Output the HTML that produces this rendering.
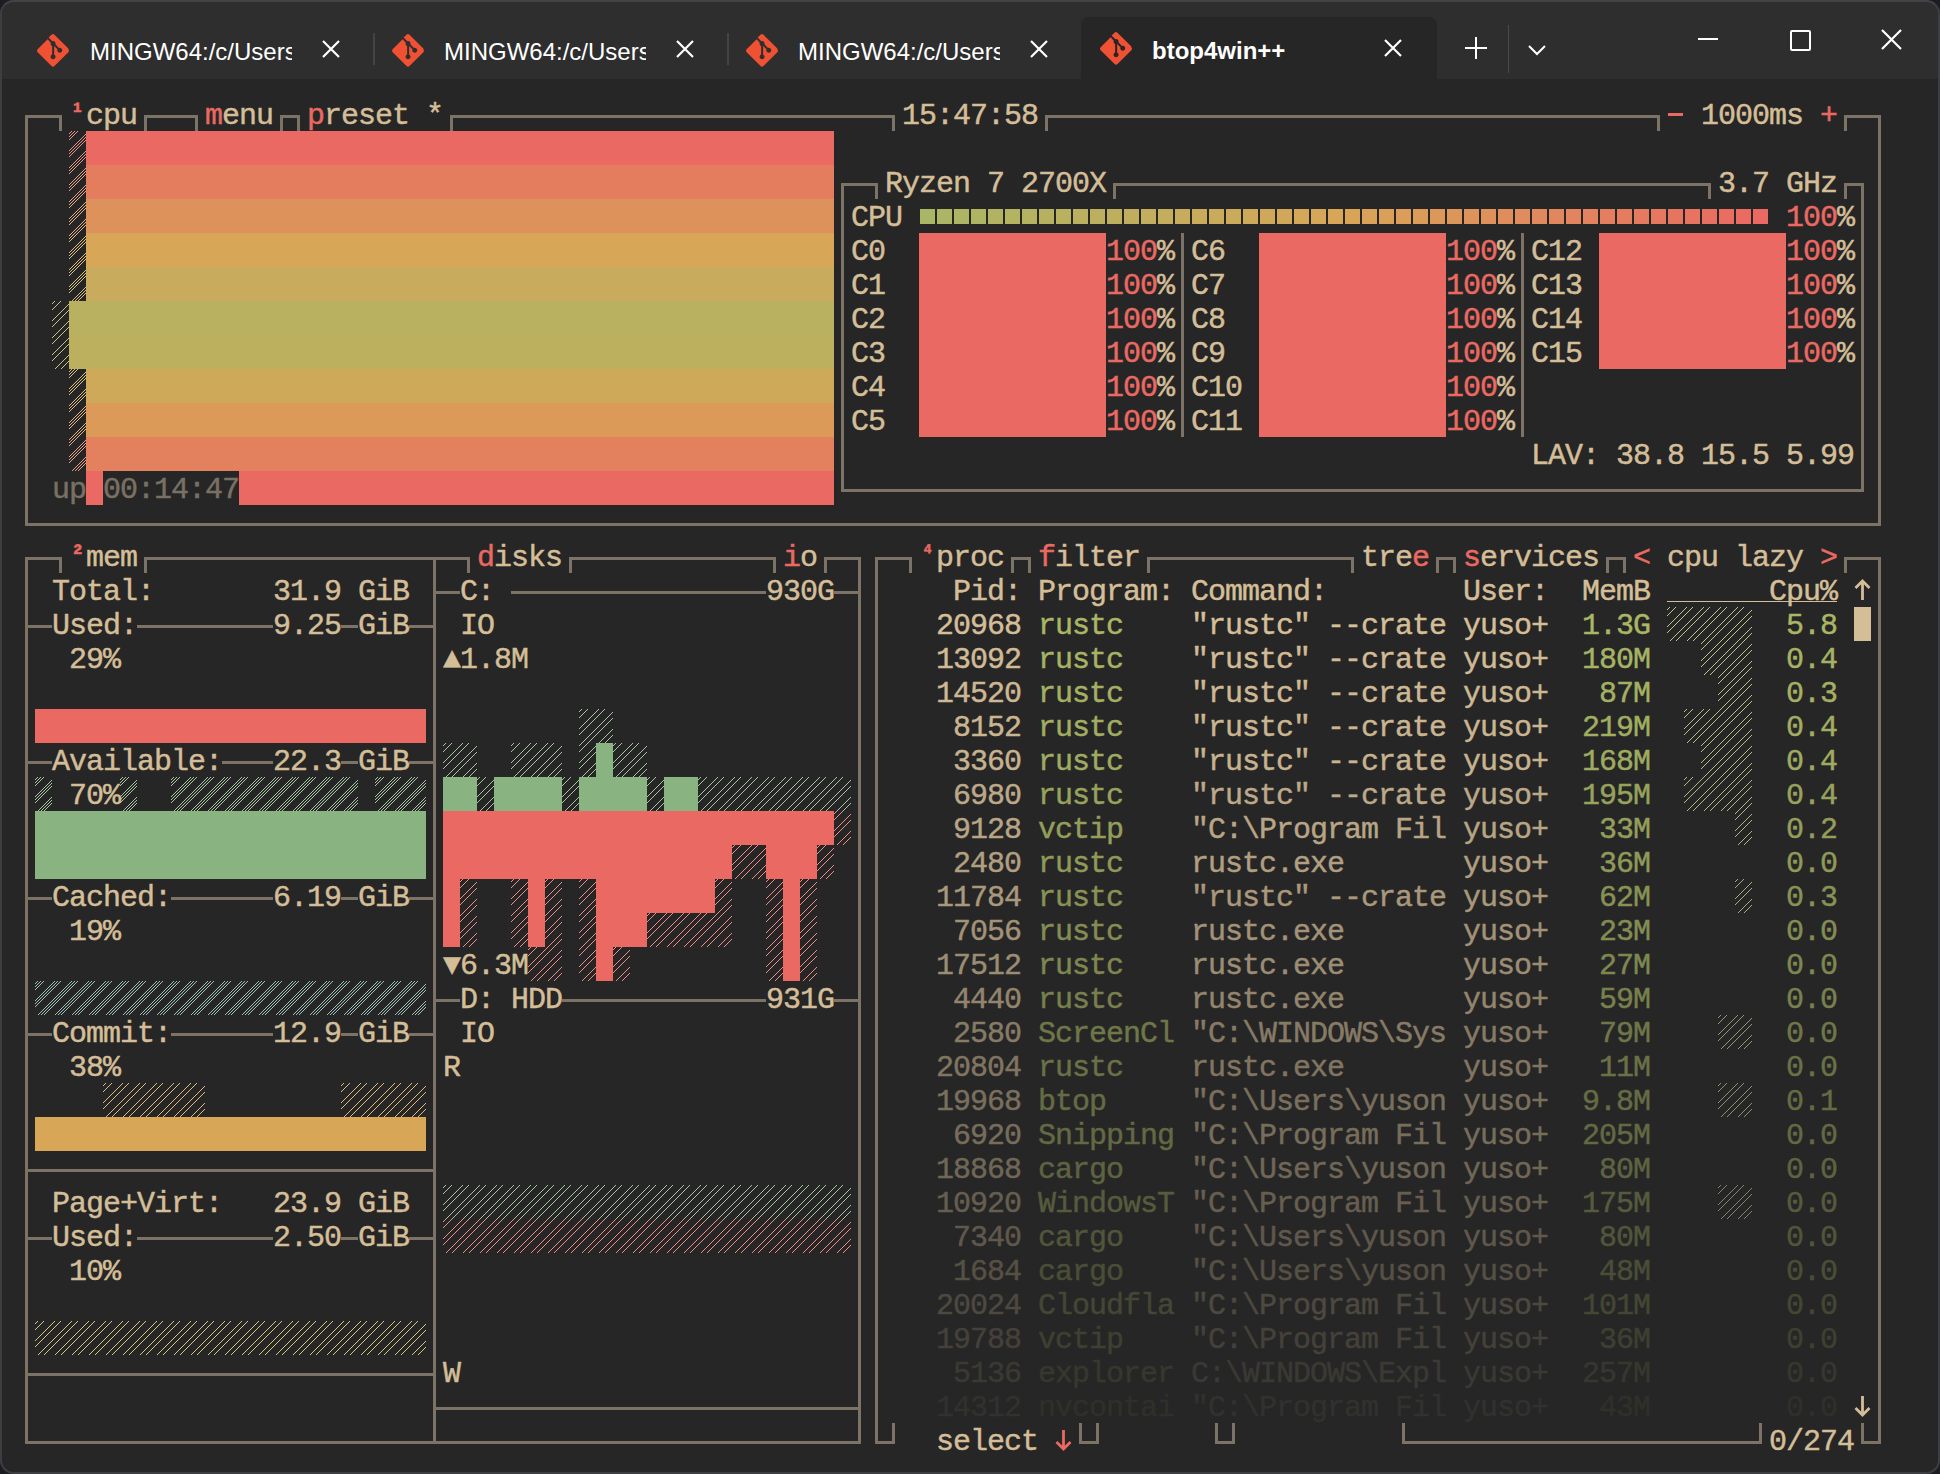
<!DOCTYPE html>
<html><head><meta charset="utf-8"><style>
html,body{margin:0;padding:0;background:#1c1d23;}
body{width:1940px;height:1474px;position:relative;overflow:hidden;}
#win{position:absolute;left:0;top:0;width:1940px;height:1474px;background:#262626;border-radius:14px;overflow:hidden;box-sizing:border-box;}
#tb{position:absolute;left:0;top:0;width:1940px;height:79px;background:#2e2e2e;}
#frame{position:absolute;left:0;top:0;width:1940px;height:1474px;box-sizing:border-box;border:2px solid #3d3e42;border-top:2px solid #424347;border-radius:14px;pointer-events:none;}
.t{position:absolute;-webkit-text-stroke:0.45px currentColor;font-family:"Liberation Mono",monospace;font-size:30px;letter-spacing:-1.00px;line-height:34px;white-space:pre;}
.tt{position:absolute;font-family:"Liberation Sans",sans-serif;font-size:24px;color:#fff;white-space:pre;overflow:hidden;line-height:34px;}
.gi{position:absolute;overflow:visible;}
svg.main{position:absolute;left:0;top:0;}
</style></head><body>
<div id="win">
<div id="tb"></div>
<div style="position:absolute;left:1081px;top:17px;width:356px;height:64px;background:#262626;border-radius:8px 8px 0 0"></div>
<svg class="gi" style="left:37px;top:34px" width="32" height="32" viewBox="0 0 92 92"><path fill="#f05133" d="M90.2 41.9L50.1 1.8c-2.3-2.3-6.1-2.3-8.4 0l-8.3 8.3 10.6 10.6c2.5-.8 5.3-.3 7.2 1.7 2 2 2.6 4.8 1.7 7.3l10.2 10.2c2.5-.9 5.3-.3 7.3 1.7 2.8 2.8 2.8 7.2 0 10-2.8 2.8-7.2 2.8-10 0-2.1-2.1-2.6-5.2-1.6-7.7l-9.5-9.5v25c.7.3 1.3.8 1.9 1.3 2.8 2.8 2.8 7.2 0 10-2.8 2.8-7.2 2.8-10 0-2.8-2.8-2.8-7.2 0-10 .7-.7 1.5-1.2 2.3-1.6V34.8c-.8-.4-1.6-.9-2.3-1.6-2.1-2.1-2.6-5.2-1.5-7.8L30.7 14.9 1.8 43.8c-2.3 2.3-2.3 6.1 0 8.4l40.1 40.1c2.3 2.3 6.1 2.3 8.4 0l39.9-39.9c2.3-2.3 2.3-6.1 0-8.5z"/></svg>
<div class="tt" style="left:90px;top:35px;width:202px">MINGW64:/c/Users\yuson</div>
<svg class="gi" style="left:322px;top:40px" width="18" height="18"><path d="M1,1 L17,17 M17,1 L1,17" stroke="#ffffff" stroke-width="2.2" fill="none"/></svg>
<svg class="gi" style="left:392px;top:34px" width="32" height="32" viewBox="0 0 92 92"><path fill="#f05133" d="M90.2 41.9L50.1 1.8c-2.3-2.3-6.1-2.3-8.4 0l-8.3 8.3 10.6 10.6c2.5-.8 5.3-.3 7.2 1.7 2 2 2.6 4.8 1.7 7.3l10.2 10.2c2.5-.9 5.3-.3 7.3 1.7 2.8 2.8 2.8 7.2 0 10-2.8 2.8-7.2 2.8-10 0-2.1-2.1-2.6-5.2-1.6-7.7l-9.5-9.5v25c.7.3 1.3.8 1.9 1.3 2.8 2.8 2.8 7.2 0 10-2.8 2.8-7.2 2.8-10 0-2.8-2.8-2.8-7.2 0-10 .7-.7 1.5-1.2 2.3-1.6V34.8c-.8-.4-1.6-.9-2.3-1.6-2.1-2.1-2.6-5.2-1.5-7.8L30.7 14.9 1.8 43.8c-2.3 2.3-2.3 6.1 0 8.4l40.1 40.1c2.3 2.3 6.1 2.3 8.4 0l39.9-39.9c2.3-2.3 2.3-6.1 0-8.5z"/></svg>
<div class="tt" style="left:444px;top:35px;width:202px">MINGW64:/c/Users\yuson</div>
<svg class="gi" style="left:676px;top:40px" width="18" height="18"><path d="M1,1 L17,17 M17,1 L1,17" stroke="#ffffff" stroke-width="2.2" fill="none"/></svg>
<svg class="gi" style="left:746px;top:34px" width="32" height="32" viewBox="0 0 92 92"><path fill="#f05133" d="M90.2 41.9L50.1 1.8c-2.3-2.3-6.1-2.3-8.4 0l-8.3 8.3 10.6 10.6c2.5-.8 5.3-.3 7.2 1.7 2 2 2.6 4.8 1.7 7.3l10.2 10.2c2.5-.9 5.3-.3 7.3 1.7 2.8 2.8 2.8 7.2 0 10-2.8 2.8-7.2 2.8-10 0-2.1-2.1-2.6-5.2-1.6-7.7l-9.5-9.5v25c.7.3 1.3.8 1.9 1.3 2.8 2.8 2.8 7.2 0 10-2.8 2.8-7.2 2.8-10 0-2.8-2.8-2.8-7.2 0-10 .7-.7 1.5-1.2 2.3-1.6V34.8c-.8-.4-1.6-.9-2.3-1.6-2.1-2.1-2.6-5.2-1.5-7.8L30.7 14.9 1.8 43.8c-2.3 2.3-2.3 6.1 0 8.4l40.1 40.1c2.3 2.3 6.1 2.3 8.4 0l39.9-39.9c2.3-2.3 2.3-6.1 0-8.5z"/></svg>
<div class="tt" style="left:798px;top:35px;width:202px">MINGW64:/c/Users\yuson</div>
<svg class="gi" style="left:1030px;top:40px" width="18" height="18"><path d="M1,1 L17,17 M17,1 L1,17" stroke="#ffffff" stroke-width="2.2" fill="none"/></svg>
<div style="position:absolute;left:373px;top:33px;width:2px;height:32px;background:#444"></div>
<div style="position:absolute;left:727px;top:33px;width:2px;height:32px;background:#444"></div>
<svg class="gi" style="left:1100px;top:32px" width="32" height="32" viewBox="0 0 92 92"><path fill="#f05133" d="M90.2 41.9L50.1 1.8c-2.3-2.3-6.1-2.3-8.4 0l-8.3 8.3 10.6 10.6c2.5-.8 5.3-.3 7.2 1.7 2 2 2.6 4.8 1.7 7.3l10.2 10.2c2.5-.9 5.3-.3 7.3 1.7 2.8 2.8 2.8 7.2 0 10-2.8 2.8-7.2 2.8-10 0-2.1-2.1-2.6-5.2-1.6-7.7l-9.5-9.5v25c.7.3 1.3.8 1.9 1.3 2.8 2.8 2.8 7.2 0 10-2.8 2.8-7.2 2.8-10 0-2.8-2.8-2.8-7.2 0-10 .7-.7 1.5-1.2 2.3-1.6V34.8c-.8-.4-1.6-.9-2.3-1.6-2.1-2.1-2.6-5.2-1.5-7.8L30.7 14.9 1.8 43.8c-2.3 2.3-2.3 6.1 0 8.4l40.1 40.1c2.3 2.3 6.1 2.3 8.4 0l39.9-39.9c2.3-2.3 2.3-6.1 0-8.5z"/></svg>
<div class="tt" style="left:1152px;top:34px;font-weight:bold">btop4win++</div>
<svg class="gi" style="left:1384px;top:39px" width="18" height="18"><path d="M1,1 L17,17 M17,1 L1,17" stroke="#ffffff" stroke-width="2.2" fill="none"/></svg>
<svg class="gi" style="left:1465px;top:37px" width="22" height="22"><path d="M11,0 V22 M0,11 H22" stroke="#fff" stroke-width="2"/></svg>
<div style="position:absolute;left:1508px;top:25px;width:1px;height:48px;background:#4a4a4a"></div>
<svg class="gi" style="left:1528px;top:45px" width="18" height="11"><path d="M1,1 L9,9 L17,1" stroke="#fff" stroke-width="2" fill="none"/></svg>
<div style="position:absolute;left:1698px;top:38px;width:20px;height:2px;background:#fff"></div>
<div style="position:absolute;left:1790px;top:30px;width:17px;height:17px;border:2px solid #fff;border-radius:2px"></div>
<svg class="gi" style="left:1881px;top:29px" width="21" height="21"><path d="M1,1 L20,20 M20,1 L1,20" stroke="#ffffff" stroke-width="2.2" fill="none"/></svg>
<svg class="main" width="1940" height="1474" shape-rendering="crispEdges"><path fill="#ea6962" d="M1668 113h15v3h-15zM86 131h748v34h-748zM86 471h17v34h-17zM239 471h595v34h-595zM1753 209h15v15h-15zM919 233h187v34h-187zM1259 233h187v34h-187zM1599 233h187v34h-187zM919 267h187v34h-187zM1259 267h187v34h-187zM1599 267h187v34h-187zM919 301h187v34h-187zM1259 301h187v34h-187zM1599 301h187v34h-187zM919 335h187v34h-187zM1259 335h187v34h-187zM1599 335h187v34h-187zM919 369h187v34h-187zM1259 369h187v34h-187zM919 403h187v34h-187zM1259 403h187v34h-187zM35 709h391v34h-391zM443 811h391v34h-391zM443 845h289v34h-289zM766 845h51v34h-51zM443 879h17v34h-17zM528 879h17v34h-17zM596 879h119v34h-119zM783 879h17v34h-17zM443 913h17v34h-17zM528 913h17v34h-17zM596 913h51v34h-51zM783 913h17v34h-17zM596 947h17v34h-17zM783 947h17v34h-17z"/><path fill="#e47d5e" d="M86 165h748v34h-748zM1617 209h15v15h-15z"/><path fill="#de925b" d="M86 199h748v34h-748z"/><path fill="#d8a657" d="M86 233h748v34h-748zM35 1117h391v34h-391z"/><path fill="#c8ab5c" d="M86 267h748v34h-748z"/><path fill="#b9b160" d="M69 301h765v34h-765z"/><path fill="#bcb05f" d="M69 335h765v34h-765z"/><path fill="#cfa95a" d="M86 369h748v34h-748zM1260 209h15v15h-15z"/><path fill="#dc9a59" d="M86 403h748v34h-748z"/><path fill="#e3815e" d="M86 437h748v34h-748z"/><path fill="#a9b665" d="M920 209h15v15h-15z"/><path fill="#abb564" d="M937 209h15v15h-15z"/><path fill="#adb564" d="M954 209h15v15h-15z"/><path fill="#afb463" d="M971 209h15v15h-15z"/><path fill="#b1b363" d="M988 209h15v15h-15z"/><path fill="#b3b362" d="M1005 209h15v15h-15z"/><path fill="#b5b262" d="M1022 209h15v15h-15z"/><path fill="#b6b161" d="M1039 209h15v15h-15z"/><path fill="#b8b160" d="M1056 209h15v15h-15z"/><path fill="#bab060" d="M1073 209h15v15h-15z"/><path fill="#bcaf5f" d="M1090 209h15v15h-15z"/><path fill="#beaf5f" d="M1107 209h15v15h-15z"/><path fill="#c0ae5e" d="M1124 209h15v15h-15z"/><path fill="#c2ae5e" d="M1141 209h15v15h-15z"/><path fill="#c4ad5d" d="M1158 209h15v15h-15z"/><path fill="#c6ac5c" d="M1175 209h15v15h-15z"/><path fill="#c8ac5c" d="M1192 209h15v15h-15z"/><path fill="#caab5b" d="M1209 209h15v15h-15z"/><path fill="#ccaa5b" d="M1226 209h15v15h-15z"/><path fill="#cdaa5a" d="M1243 209h15v15h-15z"/><path fill="#d1a859" d="M1277 209h15v15h-15z"/><path fill="#d3a858" d="M1294 209h15v15h-15z"/><path fill="#d5a758" d="M1311 209h15v15h-15z"/><path fill="#d7a657" d="M1328 209h15v15h-15z"/><path fill="#d8a557" d="M1345 209h15v15h-15z"/><path fill="#d9a258" d="M1362 209h15v15h-15z"/><path fill="#daa058" d="M1379 209h15v15h-15z"/><path fill="#db9d59" d="M1396 209h15v15h-15z"/><path fill="#db9b59" d="M1413 209h15v15h-15z"/><path fill="#dc9859" d="M1430 209h15v15h-15z"/><path fill="#dd965a" d="M1447 209h15v15h-15z"/><path fill="#de935a" d="M1464 209h15v15h-15z"/><path fill="#de915b" d="M1481 209h15v15h-15z"/><path fill="#df8e5b" d="M1498 209h15v15h-15z"/><path fill="#e08c5c" d="M1515 209h15v15h-15z"/><path fill="#e0895c" d="M1532 209h15v15h-15z"/><path fill="#e1875d" d="M1549 209h15v15h-15z"/><path fill="#e2845d" d="M1566 209h15v15h-15z"/><path fill="#e3825e" d="M1583 209h15v15h-15z"/><path fill="#e37f5e" d="M1600 209h15v15h-15z"/><path fill="#e57a5f" d="M1634 209h15v15h-15z"/><path fill="#e6785f" d="M1651 209h15v15h-15z"/><path fill="#e67560" d="M1668 209h15v15h-15z"/><path fill="#e77360" d="M1685 209h15v15h-15z"/><path fill="#e87061" d="M1702 209h15v15h-15z"/><path fill="#e96e61" d="M1719 209h15v15h-15z"/><path fill="#e96b62" d="M1736 209h15v15h-15z"/><path fill="#89b482" d="M35 811h391v68h-391zM596 743h17v34h-17zM443 777h34v34h-34zM494 777h68v34h-68zM579 777h68v34h-68zM664 777h34v34h-34z"/><path fill="#d4be98" d="M1667 601h170v1h-170zM1854 607h17v34h-17z"/></svg>
<svg class="main" width="1940" height="1474"><defs><pattern id="p0" patternUnits="userSpaceOnUse" x="18" y="97" width="17" height="17"><path d="M2 0h1v1h-1zM1 1h1v1h-1zM0 2h1v1h-1zM16 3h1v1h-1zM15 4h1v1h-1zM14 5h1v1h-1zM13 6h1v1h-1zM12 7h1v1h-1zM11 8h1v1h-1zM10 9h1v1h-1zM9 10h1v1h-1zM8 11h1v1h-1zM7 12h1v1h-1zM6 13h1v1h-1zM5 14h1v1h-1zM4 15h1v1h-1zM3 16h1v1h-1zM5 0h1v1h-1zM4 1h1v1h-1zM3 2h1v1h-1zM2 3h1v1h-1zM1 4h1v1h-1zM0 5h1v1h-1zM16 6h1v1h-1zM15 7h1v1h-1zM14 8h1v1h-1zM13 9h1v1h-1zM12 10h1v1h-1zM11 11h1v1h-1zM10 12h1v1h-1zM9 13h1v1h-1zM8 14h1v1h-1zM7 15h1v1h-1zM6 16h1v1h-1zM8 0h1v1h-1zM7 1h1v1h-1zM6 2h1v1h-1zM5 3h1v1h-1zM4 4h1v1h-1zM3 5h1v1h-1zM2 6h1v1h-1zM1 7h1v1h-1zM0 8h1v1h-1zM16 9h1v1h-1zM15 10h1v1h-1zM14 11h1v1h-1zM13 12h1v1h-1zM12 13h1v1h-1zM11 14h1v1h-1zM10 15h1v1h-1zM9 16h1v1h-1z" fill="#ef8e89" shape-rendering="crispEdges"/></pattern><pattern id="p1" patternUnits="userSpaceOnUse" x="18" y="97" width="17" height="17"><path d="M2 0h1v1h-1zM1 1h1v1h-1zM0 2h1v1h-1zM16 3h1v1h-1zM15 4h1v1h-1zM14 5h1v1h-1zM13 6h1v1h-1zM12 7h1v1h-1zM11 8h1v1h-1zM10 9h1v1h-1zM9 10h1v1h-1zM8 11h1v1h-1zM7 12h1v1h-1zM6 13h1v1h-1zM5 14h1v1h-1zM4 15h1v1h-1zM3 16h1v1h-1zM5 0h1v1h-1zM4 1h1v1h-1zM3 2h1v1h-1zM2 3h1v1h-1zM1 4h1v1h-1zM0 5h1v1h-1zM16 6h1v1h-1zM15 7h1v1h-1zM14 8h1v1h-1zM13 9h1v1h-1zM12 10h1v1h-1zM11 11h1v1h-1zM10 12h1v1h-1zM9 13h1v1h-1zM8 14h1v1h-1zM7 15h1v1h-1zM6 16h1v1h-1zM8 0h1v1h-1zM7 1h1v1h-1zM6 2h1v1h-1zM5 3h1v1h-1zM4 4h1v1h-1zM3 5h1v1h-1zM2 6h1v1h-1zM1 7h1v1h-1zM0 8h1v1h-1zM16 9h1v1h-1zM15 10h1v1h-1zM14 11h1v1h-1zM13 12h1v1h-1zM12 13h1v1h-1zM11 14h1v1h-1zM10 15h1v1h-1zM9 16h1v1h-1z" fill="#eb9e86" shape-rendering="crispEdges"/></pattern><pattern id="p2" patternUnits="userSpaceOnUse" x="18" y="97" width="17" height="17"><path d="M2 0h1v1h-1zM1 1h1v1h-1zM0 2h1v1h-1zM16 3h1v1h-1zM15 4h1v1h-1zM14 5h1v1h-1zM13 6h1v1h-1zM12 7h1v1h-1zM11 8h1v1h-1zM10 9h1v1h-1zM9 10h1v1h-1zM8 11h1v1h-1zM7 12h1v1h-1zM6 13h1v1h-1zM5 14h1v1h-1zM4 15h1v1h-1zM3 16h1v1h-1zM5 0h1v1h-1zM4 1h1v1h-1zM3 2h1v1h-1zM2 3h1v1h-1zM1 4h1v1h-1zM0 5h1v1h-1zM16 6h1v1h-1zM15 7h1v1h-1zM14 8h1v1h-1zM13 9h1v1h-1zM12 10h1v1h-1zM11 11h1v1h-1zM10 12h1v1h-1zM9 13h1v1h-1zM8 14h1v1h-1zM7 15h1v1h-1zM6 16h1v1h-1zM8 0h1v1h-1zM7 1h1v1h-1zM6 2h1v1h-1zM5 3h1v1h-1zM4 4h1v1h-1zM3 5h1v1h-1zM2 6h1v1h-1zM1 7h1v1h-1zM0 8h1v1h-1zM16 9h1v1h-1zM15 10h1v1h-1zM14 11h1v1h-1zM13 12h1v1h-1zM12 13h1v1h-1zM11 14h1v1h-1zM10 15h1v1h-1zM9 16h1v1h-1z" fill="#e6ad84" shape-rendering="crispEdges"/></pattern><pattern id="p3" patternUnits="userSpaceOnUse" x="18" y="97" width="17" height="17"><path d="M2 0h1v1h-1zM1 1h1v1h-1zM0 2h1v1h-1zM16 3h1v1h-1zM15 4h1v1h-1zM14 5h1v1h-1zM13 6h1v1h-1zM12 7h1v1h-1zM11 8h1v1h-1zM10 9h1v1h-1zM9 10h1v1h-1zM8 11h1v1h-1zM7 12h1v1h-1zM6 13h1v1h-1zM5 14h1v1h-1zM4 15h1v1h-1zM3 16h1v1h-1zM5 0h1v1h-1zM4 1h1v1h-1zM3 2h1v1h-1zM2 3h1v1h-1zM1 4h1v1h-1zM0 5h1v1h-1zM16 6h1v1h-1zM15 7h1v1h-1zM14 8h1v1h-1zM13 9h1v1h-1zM12 10h1v1h-1zM11 11h1v1h-1zM10 12h1v1h-1zM9 13h1v1h-1zM8 14h1v1h-1zM7 15h1v1h-1zM6 16h1v1h-1zM8 0h1v1h-1zM7 1h1v1h-1zM6 2h1v1h-1zM5 3h1v1h-1zM4 4h1v1h-1zM3 5h1v1h-1zM2 6h1v1h-1zM1 7h1v1h-1zM0 8h1v1h-1zM16 9h1v1h-1zM15 10h1v1h-1zM14 11h1v1h-1zM13 12h1v1h-1zM12 13h1v1h-1zM11 14h1v1h-1zM10 15h1v1h-1zM9 16h1v1h-1z" fill="#e2bc81" shape-rendering="crispEdges"/></pattern><pattern id="p4" patternUnits="userSpaceOnUse" x="18" y="97" width="17" height="17"><path d="M2 0h1v1h-1zM1 1h1v1h-1zM0 2h1v1h-1zM16 3h1v1h-1zM15 4h1v1h-1zM14 5h1v1h-1zM13 6h1v1h-1zM12 7h1v1h-1zM11 8h1v1h-1zM10 9h1v1h-1zM9 10h1v1h-1zM8 11h1v1h-1zM7 12h1v1h-1zM6 13h1v1h-1zM5 14h1v1h-1zM4 15h1v1h-1zM3 16h1v1h-1zM5 0h1v1h-1zM4 1h1v1h-1zM3 2h1v1h-1zM2 3h1v1h-1zM1 4h1v1h-1zM0 5h1v1h-1zM16 6h1v1h-1zM15 7h1v1h-1zM14 8h1v1h-1zM13 9h1v1h-1zM12 10h1v1h-1zM11 11h1v1h-1zM10 12h1v1h-1zM9 13h1v1h-1zM8 14h1v1h-1zM7 15h1v1h-1zM6 16h1v1h-1zM8 0h1v1h-1zM7 1h1v1h-1zM6 2h1v1h-1zM5 3h1v1h-1zM4 4h1v1h-1zM3 5h1v1h-1zM2 6h1v1h-1zM1 7h1v1h-1zM0 8h1v1h-1zM16 9h1v1h-1zM15 10h1v1h-1zM14 11h1v1h-1zM13 12h1v1h-1zM12 13h1v1h-1zM11 14h1v1h-1zM10 15h1v1h-1zM9 16h1v1h-1z" fill="#d6c085" shape-rendering="crispEdges"/></pattern><pattern id="p5" patternUnits="userSpaceOnUse" x="18" y="97" width="17" height="17"><path d="M2 0h1v1h-1zM1 1h1v1h-1zM0 2h1v1h-1zM16 3h1v1h-1zM15 4h1v1h-1zM14 5h1v1h-1zM13 6h1v1h-1zM12 7h1v1h-1zM11 8h1v1h-1zM10 9h1v1h-1zM9 10h1v1h-1zM8 11h1v1h-1zM7 12h1v1h-1zM6 13h1v1h-1zM5 14h1v1h-1zM4 15h1v1h-1zM3 16h1v1h-1zM8 0h1v1h-1zM7 1h1v1h-1zM6 2h1v1h-1zM5 3h1v1h-1zM4 4h1v1h-1zM3 5h1v1h-1zM2 6h1v1h-1zM1 7h1v1h-1zM0 8h1v1h-1zM16 9h1v1h-1zM15 10h1v1h-1zM14 11h1v1h-1zM13 12h1v1h-1zM12 13h1v1h-1zM11 14h1v1h-1zM10 15h1v1h-1zM9 16h1v1h-1z" fill="#cac488" shape-rendering="crispEdges"/></pattern><pattern id="p6" patternUnits="userSpaceOnUse" x="18" y="97" width="17" height="17"><path d="M2 0h1v1h-1zM1 1h1v1h-1zM0 2h1v1h-1zM16 3h1v1h-1zM15 4h1v1h-1zM14 5h1v1h-1zM13 6h1v1h-1zM12 7h1v1h-1zM11 8h1v1h-1zM10 9h1v1h-1zM9 10h1v1h-1zM8 11h1v1h-1zM7 12h1v1h-1zM6 13h1v1h-1zM5 14h1v1h-1zM4 15h1v1h-1zM3 16h1v1h-1zM8 0h1v1h-1zM7 1h1v1h-1zM6 2h1v1h-1zM5 3h1v1h-1zM4 4h1v1h-1zM3 5h1v1h-1zM2 6h1v1h-1zM1 7h1v1h-1zM0 8h1v1h-1zM16 9h1v1h-1zM15 10h1v1h-1zM14 11h1v1h-1zM13 12h1v1h-1zM12 13h1v1h-1zM11 14h1v1h-1zM10 15h1v1h-1zM9 16h1v1h-1z" fill="#cdc487" shape-rendering="crispEdges"/></pattern><pattern id="p7" patternUnits="userSpaceOnUse" x="18" y="97" width="17" height="17"><path d="M2 0h1v1h-1zM1 1h1v1h-1zM0 2h1v1h-1zM16 3h1v1h-1zM15 4h1v1h-1zM14 5h1v1h-1zM13 6h1v1h-1zM12 7h1v1h-1zM11 8h1v1h-1zM10 9h1v1h-1zM9 10h1v1h-1zM8 11h1v1h-1zM7 12h1v1h-1zM6 13h1v1h-1zM5 14h1v1h-1zM4 15h1v1h-1zM3 16h1v1h-1zM5 0h1v1h-1zM4 1h1v1h-1zM3 2h1v1h-1zM2 3h1v1h-1zM1 4h1v1h-1zM0 5h1v1h-1zM16 6h1v1h-1zM15 7h1v1h-1zM14 8h1v1h-1zM13 9h1v1h-1zM12 10h1v1h-1zM11 11h1v1h-1zM10 12h1v1h-1zM9 13h1v1h-1zM8 14h1v1h-1zM7 15h1v1h-1zM6 16h1v1h-1zM8 0h1v1h-1zM7 1h1v1h-1zM6 2h1v1h-1zM5 3h1v1h-1zM4 4h1v1h-1zM3 5h1v1h-1zM2 6h1v1h-1zM1 7h1v1h-1zM0 8h1v1h-1zM16 9h1v1h-1zM15 10h1v1h-1zM14 11h1v1h-1zM13 12h1v1h-1zM12 13h1v1h-1zM11 14h1v1h-1zM10 15h1v1h-1zM9 16h1v1h-1z" fill="#dbbe83" shape-rendering="crispEdges"/></pattern><pattern id="p8" patternUnits="userSpaceOnUse" x="18" y="97" width="17" height="17"><path d="M2 0h1v1h-1zM1 1h1v1h-1zM0 2h1v1h-1zM16 3h1v1h-1zM15 4h1v1h-1zM14 5h1v1h-1zM13 6h1v1h-1zM12 7h1v1h-1zM11 8h1v1h-1zM10 9h1v1h-1zM9 10h1v1h-1zM8 11h1v1h-1zM7 12h1v1h-1zM6 13h1v1h-1zM5 14h1v1h-1zM4 15h1v1h-1zM3 16h1v1h-1zM5 0h1v1h-1zM4 1h1v1h-1zM3 2h1v1h-1zM2 3h1v1h-1zM1 4h1v1h-1zM0 5h1v1h-1zM16 6h1v1h-1zM15 7h1v1h-1zM14 8h1v1h-1zM13 9h1v1h-1zM12 10h1v1h-1zM11 11h1v1h-1zM10 12h1v1h-1zM9 13h1v1h-1zM8 14h1v1h-1zM7 15h1v1h-1zM6 16h1v1h-1zM8 0h1v1h-1zM7 1h1v1h-1zM6 2h1v1h-1zM5 3h1v1h-1zM4 4h1v1h-1zM3 5h1v1h-1zM2 6h1v1h-1zM1 7h1v1h-1zM0 8h1v1h-1zM16 9h1v1h-1zM15 10h1v1h-1zM14 11h1v1h-1zM13 12h1v1h-1zM12 13h1v1h-1zM11 14h1v1h-1zM10 15h1v1h-1zM9 16h1v1h-1z" fill="#e5b382" shape-rendering="crispEdges"/></pattern><pattern id="p9" patternUnits="userSpaceOnUse" x="18" y="97" width="17" height="17"><path d="M2 0h1v1h-1zM1 1h1v1h-1zM0 2h1v1h-1zM16 3h1v1h-1zM15 4h1v1h-1zM14 5h1v1h-1zM13 6h1v1h-1zM12 7h1v1h-1zM11 8h1v1h-1zM10 9h1v1h-1zM9 10h1v1h-1zM8 11h1v1h-1zM7 12h1v1h-1zM6 13h1v1h-1zM5 14h1v1h-1zM4 15h1v1h-1zM3 16h1v1h-1zM5 0h1v1h-1zM4 1h1v1h-1zM3 2h1v1h-1zM2 3h1v1h-1zM1 4h1v1h-1zM0 5h1v1h-1zM16 6h1v1h-1zM15 7h1v1h-1zM14 8h1v1h-1zM13 9h1v1h-1zM12 10h1v1h-1zM11 11h1v1h-1zM10 12h1v1h-1zM9 13h1v1h-1zM8 14h1v1h-1zM7 15h1v1h-1zM6 16h1v1h-1zM8 0h1v1h-1zM7 1h1v1h-1zM6 2h1v1h-1zM5 3h1v1h-1zM4 4h1v1h-1zM3 5h1v1h-1zM2 6h1v1h-1zM1 7h1v1h-1zM0 8h1v1h-1zM16 9h1v1h-1zM15 10h1v1h-1zM14 11h1v1h-1zM13 12h1v1h-1zM12 13h1v1h-1zM11 14h1v1h-1zM10 15h1v1h-1zM9 16h1v1h-1z" fill="#eaa086" shape-rendering="crispEdges"/></pattern><pattern id="p10" patternUnits="userSpaceOnUse" x="18" y="97" width="17" height="17"><path d="M2 0h1v1h-1zM1 1h1v1h-1zM0 2h1v1h-1zM16 3h1v1h-1zM15 4h1v1h-1zM14 5h1v1h-1zM13 6h1v1h-1zM12 7h1v1h-1zM11 8h1v1h-1zM10 9h1v1h-1zM9 10h1v1h-1zM8 11h1v1h-1zM7 12h1v1h-1zM6 13h1v1h-1zM5 14h1v1h-1zM4 15h1v1h-1zM3 16h1v1h-1zM5 0h1v1h-1zM4 1h1v1h-1zM3 2h1v1h-1zM2 3h1v1h-1zM1 4h1v1h-1zM0 5h1v1h-1zM16 6h1v1h-1zM15 7h1v1h-1zM14 8h1v1h-1zM13 9h1v1h-1zM12 10h1v1h-1zM11 11h1v1h-1zM10 12h1v1h-1zM9 13h1v1h-1zM8 14h1v1h-1zM7 15h1v1h-1zM6 16h1v1h-1zM8 0h1v1h-1zM7 1h1v1h-1zM6 2h1v1h-1zM5 3h1v1h-1zM4 4h1v1h-1zM3 5h1v1h-1zM2 6h1v1h-1zM1 7h1v1h-1zM0 8h1v1h-1zM16 9h1v1h-1zM15 10h1v1h-1zM14 11h1v1h-1zM13 12h1v1h-1zM12 13h1v1h-1zM11 14h1v1h-1zM10 15h1v1h-1zM9 16h1v1h-1z" fill="#a6c7a1" shape-rendering="crispEdges"/></pattern><pattern id="p11" patternUnits="userSpaceOnUse" x="18" y="97" width="17" height="17"><path d="M2 0h1v1h-1zM1 1h1v1h-1zM0 2h1v1h-1zM16 3h1v1h-1zM15 4h1v1h-1zM14 5h1v1h-1zM13 6h1v1h-1zM12 7h1v1h-1zM11 8h1v1h-1zM10 9h1v1h-1zM9 10h1v1h-1zM8 11h1v1h-1zM7 12h1v1h-1zM6 13h1v1h-1zM5 14h1v1h-1zM4 15h1v1h-1zM3 16h1v1h-1zM5 0h1v1h-1zM4 1h1v1h-1zM3 2h1v1h-1zM2 3h1v1h-1zM1 4h1v1h-1zM0 5h1v1h-1zM16 6h1v1h-1zM15 7h1v1h-1zM14 8h1v1h-1zM13 9h1v1h-1zM12 10h1v1h-1zM11 11h1v1h-1zM10 12h1v1h-1zM9 13h1v1h-1zM8 14h1v1h-1zM7 15h1v1h-1zM6 16h1v1h-1zM8 0h1v1h-1zM7 1h1v1h-1zM6 2h1v1h-1zM5 3h1v1h-1zM4 4h1v1h-1zM3 5h1v1h-1zM2 6h1v1h-1zM1 7h1v1h-1zM0 8h1v1h-1zM16 9h1v1h-1zM15 10h1v1h-1zM14 11h1v1h-1zM13 12h1v1h-1zM12 13h1v1h-1zM11 14h1v1h-1zM10 15h1v1h-1zM9 16h1v1h-1z" fill="#9ec2ba" shape-rendering="crispEdges"/></pattern><pattern id="p12" patternUnits="userSpaceOnUse" x="18" y="97" width="17" height="17"><path d="M2 0h1v1h-1zM1 1h1v1h-1zM0 2h1v1h-1zM16 3h1v1h-1zM15 4h1v1h-1zM14 5h1v1h-1zM13 6h1v1h-1zM12 7h1v1h-1zM11 8h1v1h-1zM10 9h1v1h-1zM9 10h1v1h-1zM8 11h1v1h-1zM7 12h1v1h-1zM6 13h1v1h-1zM5 14h1v1h-1zM4 15h1v1h-1zM3 16h1v1h-1zM8 0h1v1h-1zM7 1h1v1h-1zM6 2h1v1h-1zM5 3h1v1h-1zM4 4h1v1h-1zM3 5h1v1h-1zM2 6h1v1h-1zM1 7h1v1h-1zM0 8h1v1h-1zM16 9h1v1h-1zM15 10h1v1h-1zM14 11h1v1h-1zM13 12h1v1h-1zM12 13h1v1h-1zM11 14h1v1h-1zM10 15h1v1h-1zM9 16h1v1h-1z" fill="#e2bc81" shape-rendering="crispEdges"/></pattern><pattern id="p13" patternUnits="userSpaceOnUse" x="18" y="97" width="17" height="17"><path d="M2 0h1v1h-1zM1 1h1v1h-1zM0 2h1v1h-1zM16 3h1v1h-1zM15 4h1v1h-1zM14 5h1v1h-1zM13 6h1v1h-1zM12 7h1v1h-1zM11 8h1v1h-1zM10 9h1v1h-1zM9 10h1v1h-1zM8 11h1v1h-1zM7 12h1v1h-1zM6 13h1v1h-1zM5 14h1v1h-1zM4 15h1v1h-1zM3 16h1v1h-1zM8 0h1v1h-1zM7 1h1v1h-1zM6 2h1v1h-1zM5 3h1v1h-1zM4 4h1v1h-1zM3 5h1v1h-1zM2 6h1v1h-1zM1 7h1v1h-1zM0 8h1v1h-1zM16 9h1v1h-1zM15 10h1v1h-1zM14 11h1v1h-1zM13 12h1v1h-1zM12 13h1v1h-1zM11 14h1v1h-1zM10 15h1v1h-1zM9 16h1v1h-1z" fill="#d6c783" shape-rendering="crispEdges"/></pattern><pattern id="p14" patternUnits="userSpaceOnUse" x="18" y="97" width="17" height="17"><path d="M2 0h1v1h-1zM1 1h1v1h-1zM0 2h1v1h-1zM16 3h1v1h-1zM15 4h1v1h-1zM14 5h1v1h-1zM13 6h1v1h-1zM12 7h1v1h-1zM11 8h1v1h-1zM10 9h1v1h-1zM9 10h1v1h-1zM8 11h1v1h-1zM7 12h1v1h-1zM6 13h1v1h-1zM5 14h1v1h-1zM4 15h1v1h-1zM3 16h1v1h-1zM8 0h1v1h-1zM7 1h1v1h-1zM6 2h1v1h-1zM5 3h1v1h-1zM4 4h1v1h-1zM3 5h1v1h-1zM2 6h1v1h-1zM1 7h1v1h-1zM0 8h1v1h-1zM16 9h1v1h-1zM15 10h1v1h-1zM14 11h1v1h-1zM13 12h1v1h-1zM12 13h1v1h-1zM11 14h1v1h-1zM10 15h1v1h-1zM9 16h1v1h-1z" fill="#a6c7a1" shape-rendering="crispEdges"/></pattern><pattern id="p15" patternUnits="userSpaceOnUse" x="18" y="97" width="17" height="17"><path d="M2 0h1v1h-1zM1 1h1v1h-1zM0 2h1v1h-1zM16 3h1v1h-1zM15 4h1v1h-1zM14 5h1v1h-1zM13 6h1v1h-1zM12 7h1v1h-1zM11 8h1v1h-1zM10 9h1v1h-1zM9 10h1v1h-1zM8 11h1v1h-1zM7 12h1v1h-1zM6 13h1v1h-1zM5 14h1v1h-1zM4 15h1v1h-1zM3 16h1v1h-1zM8 0h1v1h-1zM7 1h1v1h-1zM6 2h1v1h-1zM5 3h1v1h-1zM4 4h1v1h-1zM3 5h1v1h-1zM2 6h1v1h-1zM1 7h1v1h-1zM0 8h1v1h-1zM16 9h1v1h-1zM15 10h1v1h-1zM14 11h1v1h-1zM13 12h1v1h-1zM12 13h1v1h-1zM11 14h1v1h-1zM10 15h1v1h-1zM9 16h1v1h-1z" fill="#ef8e89" shape-rendering="crispEdges"/></pattern><pattern id="p16" patternUnits="userSpaceOnUse" x="18" y="97" width="17" height="17"><path d="M2 0h1v1h-1zM1 1h1v1h-1zM0 2h1v1h-1zM16 3h1v1h-1zM15 4h1v1h-1zM14 5h1v1h-1zM13 6h1v1h-1zM12 7h1v1h-1zM11 8h1v1h-1zM10 9h1v1h-1zM9 10h1v1h-1zM8 11h1v1h-1zM7 12h1v1h-1zM6 13h1v1h-1zM5 14h1v1h-1zM4 15h1v1h-1zM3 16h1v1h-1zM8 0h1v1h-1zM7 1h1v1h-1zM6 2h1v1h-1zM5 3h1v1h-1zM4 4h1v1h-1zM3 5h1v1h-1zM2 6h1v1h-1zM1 7h1v1h-1zM0 8h1v1h-1zM16 9h1v1h-1zM15 10h1v1h-1zM14 11h1v1h-1zM13 12h1v1h-1zM12 13h1v1h-1zM11 14h1v1h-1zM10 15h1v1h-1zM9 16h1v1h-1z" fill="#bec88c" shape-rendering="crispEdges"/></pattern><pattern id="p17" patternUnits="userSpaceOnUse" x="18" y="97" width="17" height="17"><path d="M2 0h1v1h-1zM1 1h1v1h-1zM0 2h1v1h-1zM16 3h1v1h-1zM15 4h1v1h-1zM14 5h1v1h-1zM13 6h1v1h-1zM12 7h1v1h-1zM11 8h1v1h-1zM10 9h1v1h-1zM9 10h1v1h-1zM8 11h1v1h-1zM7 12h1v1h-1zM6 13h1v1h-1zM5 14h1v1h-1zM4 15h1v1h-1zM3 16h1v1h-1zM8 0h1v1h-1zM7 1h1v1h-1zM6 2h1v1h-1zM5 3h1v1h-1zM4 4h1v1h-1zM3 5h1v1h-1zM2 6h1v1h-1zM1 7h1v1h-1zM0 8h1v1h-1zM16 9h1v1h-1zM15 10h1v1h-1zM14 11h1v1h-1zM13 12h1v1h-1zM12 13h1v1h-1zM11 14h1v1h-1zM10 15h1v1h-1zM9 16h1v1h-1z" fill="#bcc68b" shape-rendering="crispEdges"/></pattern><pattern id="p18" patternUnits="userSpaceOnUse" x="18" y="97" width="17" height="17"><path d="M2 0h1v1h-1zM1 1h1v1h-1zM0 2h1v1h-1zM16 3h1v1h-1zM15 4h1v1h-1zM14 5h1v1h-1zM13 6h1v1h-1zM12 7h1v1h-1zM11 8h1v1h-1zM10 9h1v1h-1zM9 10h1v1h-1zM8 11h1v1h-1zM7 12h1v1h-1zM6 13h1v1h-1zM5 14h1v1h-1zM4 15h1v1h-1zM3 16h1v1h-1zM8 0h1v1h-1zM7 1h1v1h-1zM6 2h1v1h-1zM5 3h1v1h-1zM4 4h1v1h-1zM3 5h1v1h-1zM2 6h1v1h-1zM1 7h1v1h-1zM0 8h1v1h-1zM16 9h1v1h-1zM15 10h1v1h-1zM14 11h1v1h-1zM13 12h1v1h-1zM12 13h1v1h-1zM11 14h1v1h-1zM10 15h1v1h-1zM9 16h1v1h-1z" fill="#bbc489" shape-rendering="crispEdges"/></pattern><pattern id="p19" patternUnits="userSpaceOnUse" x="18" y="97" width="17" height="17"><path d="M2 0h1v1h-1zM1 1h1v1h-1zM0 2h1v1h-1zM16 3h1v1h-1zM15 4h1v1h-1zM14 5h1v1h-1zM13 6h1v1h-1zM12 7h1v1h-1zM11 8h1v1h-1zM10 9h1v1h-1zM9 10h1v1h-1zM8 11h1v1h-1zM7 12h1v1h-1zM6 13h1v1h-1zM5 14h1v1h-1zM4 15h1v1h-1zM3 16h1v1h-1zM8 0h1v1h-1zM7 1h1v1h-1zM6 2h1v1h-1zM5 3h1v1h-1zM4 4h1v1h-1zM3 5h1v1h-1zM2 6h1v1h-1zM1 7h1v1h-1zM0 8h1v1h-1zM16 9h1v1h-1zM15 10h1v1h-1zM14 11h1v1h-1zM13 12h1v1h-1zM12 13h1v1h-1zM11 14h1v1h-1zM10 15h1v1h-1zM9 16h1v1h-1z" fill="#b8c288" shape-rendering="crispEdges"/></pattern><pattern id="p20" patternUnits="userSpaceOnUse" x="18" y="97" width="17" height="17"><path d="M2 0h1v1h-1zM1 1h1v1h-1zM0 2h1v1h-1zM16 3h1v1h-1zM15 4h1v1h-1zM14 5h1v1h-1zM13 6h1v1h-1zM12 7h1v1h-1zM11 8h1v1h-1zM10 9h1v1h-1zM9 10h1v1h-1zM8 11h1v1h-1zM7 12h1v1h-1zM6 13h1v1h-1zM5 14h1v1h-1zM4 15h1v1h-1zM3 16h1v1h-1zM8 0h1v1h-1zM7 1h1v1h-1zM6 2h1v1h-1zM5 3h1v1h-1zM4 4h1v1h-1zM3 5h1v1h-1zM2 6h1v1h-1zM1 7h1v1h-1zM0 8h1v1h-1zM16 9h1v1h-1zM15 10h1v1h-1zM14 11h1v1h-1zM13 12h1v1h-1zM12 13h1v1h-1zM11 14h1v1h-1zM10 15h1v1h-1zM9 16h1v1h-1z" fill="#b7c088" shape-rendering="crispEdges"/></pattern><pattern id="p21" patternUnits="userSpaceOnUse" x="18" y="97" width="17" height="17"><path d="M2 0h1v1h-1zM1 1h1v1h-1zM0 2h1v1h-1zM16 3h1v1h-1zM15 4h1v1h-1zM14 5h1v1h-1zM13 6h1v1h-1zM12 7h1v1h-1zM11 8h1v1h-1zM10 9h1v1h-1zM9 10h1v1h-1zM8 11h1v1h-1zM7 12h1v1h-1zM6 13h1v1h-1zM5 14h1v1h-1zM4 15h1v1h-1zM3 16h1v1h-1zM8 0h1v1h-1zM7 1h1v1h-1zM6 2h1v1h-1zM5 3h1v1h-1zM4 4h1v1h-1zM3 5h1v1h-1zM2 6h1v1h-1zM1 7h1v1h-1zM0 8h1v1h-1zM16 9h1v1h-1zM15 10h1v1h-1zM14 11h1v1h-1zM13 12h1v1h-1zM12 13h1v1h-1zM11 14h1v1h-1zM10 15h1v1h-1zM9 16h1v1h-1z" fill="#b1b985" shape-rendering="crispEdges"/></pattern><pattern id="p22" patternUnits="userSpaceOnUse" x="18" y="97" width="17" height="17"><path d="M2 0h1v1h-1zM1 1h1v1h-1zM0 2h1v1h-1zM16 3h1v1h-1zM15 4h1v1h-1zM14 5h1v1h-1zM13 6h1v1h-1zM12 7h1v1h-1zM11 8h1v1h-1zM10 9h1v1h-1zM9 10h1v1h-1zM8 11h1v1h-1zM7 12h1v1h-1zM6 13h1v1h-1zM5 14h1v1h-1zM4 15h1v1h-1zM3 16h1v1h-1zM8 0h1v1h-1zM7 1h1v1h-1zM6 2h1v1h-1zM5 3h1v1h-1zM4 4h1v1h-1zM3 5h1v1h-1zM2 6h1v1h-1zM1 7h1v1h-1zM0 8h1v1h-1zM16 9h1v1h-1zM15 10h1v1h-1zM14 11h1v1h-1zM13 12h1v1h-1zM12 13h1v1h-1zM11 14h1v1h-1zM10 15h1v1h-1zM9 16h1v1h-1z" fill="#afb684" shape-rendering="crispEdges"/></pattern><pattern id="p23" patternUnits="userSpaceOnUse" x="18" y="97" width="17" height="17"><path d="M2 0h1v1h-1zM1 1h1v1h-1zM0 2h1v1h-1zM16 3h1v1h-1zM15 4h1v1h-1zM14 5h1v1h-1zM13 6h1v1h-1zM12 7h1v1h-1zM11 8h1v1h-1zM10 9h1v1h-1zM9 10h1v1h-1zM8 11h1v1h-1zM7 12h1v1h-1zM6 13h1v1h-1zM5 14h1v1h-1zM4 15h1v1h-1zM3 16h1v1h-1zM8 0h1v1h-1zM7 1h1v1h-1zM6 2h1v1h-1zM5 3h1v1h-1zM4 4h1v1h-1zM3 5h1v1h-1zM2 6h1v1h-1zM1 7h1v1h-1zM0 8h1v1h-1zM16 9h1v1h-1zM15 10h1v1h-1zM14 11h1v1h-1zM13 12h1v1h-1zM12 13h1v1h-1zM11 14h1v1h-1zM10 15h1v1h-1zM9 16h1v1h-1z" fill="#a6ad80" shape-rendering="crispEdges"/></pattern><pattern id="p24" patternUnits="userSpaceOnUse" x="18" y="97" width="17" height="17"><path d="M2 0h1v1h-1zM1 1h1v1h-1zM0 2h1v1h-1zM16 3h1v1h-1zM15 4h1v1h-1zM14 5h1v1h-1zM13 6h1v1h-1zM12 7h1v1h-1zM11 8h1v1h-1zM10 9h1v1h-1zM9 10h1v1h-1zM8 11h1v1h-1zM7 12h1v1h-1zM6 13h1v1h-1zM5 14h1v1h-1zM4 15h1v1h-1zM3 16h1v1h-1zM8 0h1v1h-1zM7 1h1v1h-1zM6 2h1v1h-1zM5 3h1v1h-1zM4 4h1v1h-1zM3 5h1v1h-1zM2 6h1v1h-1zM1 7h1v1h-1zM0 8h1v1h-1zM16 9h1v1h-1zM15 10h1v1h-1zM14 11h1v1h-1zM13 12h1v1h-1zM12 13h1v1h-1zM11 14h1v1h-1zM10 15h1v1h-1zM9 16h1v1h-1z" fill="#939976" shape-rendering="crispEdges"/></pattern><pattern id="p25" patternUnits="userSpaceOnUse" x="18" y="97" width="17" height="17"><path d="M2 0h1v1h-1zM1 1h1v1h-1zM0 2h1v1h-1zM16 3h1v1h-1zM15 4h1v1h-1zM14 5h1v1h-1zM13 6h1v1h-1zM12 7h1v1h-1zM11 8h1v1h-1zM10 9h1v1h-1zM9 10h1v1h-1zM8 11h1v1h-1zM7 12h1v1h-1zM6 13h1v1h-1zM5 14h1v1h-1zM4 15h1v1h-1zM3 16h1v1h-1zM8 0h1v1h-1zM7 1h1v1h-1zM6 2h1v1h-1zM5 3h1v1h-1zM4 4h1v1h-1zM3 5h1v1h-1zM2 6h1v1h-1zM1 7h1v1h-1zM0 8h1v1h-1zM16 9h1v1h-1zM15 10h1v1h-1zM14 11h1v1h-1zM13 12h1v1h-1zM12 13h1v1h-1zM11 14h1v1h-1zM10 15h1v1h-1zM9 16h1v1h-1z" fill="#8c9173" shape-rendering="crispEdges"/></pattern><pattern id="p26" patternUnits="userSpaceOnUse" x="18" y="97" width="17" height="17"><path d="M2 0h1v1h-1zM1 1h1v1h-1zM0 2h1v1h-1zM16 3h1v1h-1zM15 4h1v1h-1zM14 5h1v1h-1zM13 6h1v1h-1zM12 7h1v1h-1zM11 8h1v1h-1zM10 9h1v1h-1zM9 10h1v1h-1zM8 11h1v1h-1zM7 12h1v1h-1zM6 13h1v1h-1zM5 14h1v1h-1zM4 15h1v1h-1zM3 16h1v1h-1zM8 0h1v1h-1zM7 1h1v1h-1zM6 2h1v1h-1zM5 3h1v1h-1zM4 4h1v1h-1zM3 5h1v1h-1zM2 6h1v1h-1zM1 7h1v1h-1zM0 8h1v1h-1zM16 9h1v1h-1zM15 10h1v1h-1zM14 11h1v1h-1zM13 12h1v1h-1zM12 13h1v1h-1zM11 14h1v1h-1zM10 15h1v1h-1zM9 16h1v1h-1z" fill="#80846e" shape-rendering="crispEdges"/></pattern></defs><rect x="69" y="131" width="17" height="34" fill="url(#p0)"/><rect x="69" y="165" width="17" height="34" fill="url(#p1)"/><rect x="69" y="199" width="17" height="34" fill="url(#p2)"/><rect x="69" y="233" width="17" height="34" fill="url(#p3)"/><rect x="69" y="267" width="17" height="34" fill="url(#p4)"/><rect x="52" y="301" width="17" height="34" fill="url(#p5)"/><rect x="52" y="335" width="17" height="34" fill="url(#p6)"/><rect x="69" y="369" width="17" height="34" fill="url(#p7)"/><rect x="69" y="403" width="17" height="34" fill="url(#p8)"/><rect x="69" y="437" width="17" height="34" fill="url(#p9)"/><rect x="35" y="777" width="17" height="34" fill="url(#p10)"/><rect x="120" y="777" width="17" height="34" fill="url(#p10)"/><rect x="171" y="777" width="187" height="34" fill="url(#p10)"/><rect x="375" y="777" width="51" height="34" fill="url(#p10)"/><rect x="35" y="981" width="391" height="34" fill="url(#p11)"/><rect x="103" y="1083" width="102" height="34" fill="url(#p12)"/><rect x="341" y="1083" width="85" height="34" fill="url(#p12)"/><rect x="35" y="1321" width="391" height="34" fill="url(#p13)"/><rect x="579" y="709" width="34" height="34" fill="url(#p14)"/><rect x="443" y="743" width="34" height="34" fill="url(#p14)"/><rect x="511" y="743" width="51" height="34" fill="url(#p14)"/><rect x="579" y="743" width="17" height="34" fill="url(#p14)"/><rect x="613" y="743" width="34" height="34" fill="url(#p14)"/><rect x="477" y="777" width="17" height="34" fill="url(#p14)"/><rect x="562" y="777" width="17" height="34" fill="url(#p14)"/><rect x="647" y="777" width="17" height="34" fill="url(#p14)"/><rect x="698" y="777" width="153" height="34" fill="url(#p14)"/><rect x="834" y="811" width="17" height="34" fill="url(#p15)"/><rect x="732" y="845" width="34" height="34" fill="url(#p15)"/><rect x="817" y="845" width="17" height="34" fill="url(#p15)"/><rect x="460" y="879" width="17" height="34" fill="url(#p15)"/><rect x="511" y="879" width="17" height="34" fill="url(#p15)"/><rect x="545" y="879" width="17" height="34" fill="url(#p15)"/><rect x="579" y="879" width="17" height="34" fill="url(#p15)"/><rect x="715" y="879" width="17" height="34" fill="url(#p15)"/><rect x="766" y="879" width="17" height="34" fill="url(#p15)"/><rect x="800" y="879" width="17" height="34" fill="url(#p15)"/><rect x="460" y="913" width="17" height="34" fill="url(#p15)"/><rect x="511" y="913" width="17" height="34" fill="url(#p15)"/><rect x="545" y="913" width="17" height="34" fill="url(#p15)"/><rect x="579" y="913" width="17" height="34" fill="url(#p15)"/><rect x="647" y="913" width="85" height="34" fill="url(#p15)"/><rect x="766" y="913" width="17" height="34" fill="url(#p15)"/><rect x="800" y="913" width="17" height="34" fill="url(#p15)"/><rect x="528" y="947" width="34" height="34" fill="url(#p15)"/><rect x="579" y="947" width="17" height="34" fill="url(#p15)"/><rect x="613" y="947" width="17" height="34" fill="url(#p15)"/><rect x="766" y="947" width="17" height="34" fill="url(#p15)"/><rect x="800" y="947" width="17" height="34" fill="url(#p15)"/><rect x="443" y="1185" width="408" height="34" fill="url(#p14)"/><rect x="443" y="1219" width="408" height="34" fill="url(#p15)"/><rect x="1667" y="607" width="85" height="34" fill="url(#p16)"/><rect x="1701" y="641" width="51" height="34" fill="url(#p17)"/><rect x="1718" y="675" width="34" height="34" fill="url(#p18)"/><rect x="1684" y="709" width="68" height="34" fill="url(#p19)"/><rect x="1701" y="743" width="51" height="34" fill="url(#p20)"/><rect x="1684" y="777" width="68" height="34" fill="url(#p21)"/><rect x="1735" y="811" width="17" height="34" fill="url(#p22)"/><rect x="1735" y="879" width="17" height="34" fill="url(#p23)"/><rect x="1718" y="1015" width="34" height="34" fill="url(#p24)"/><rect x="1718" y="1083" width="34" height="34" fill="url(#p25)"/><rect x="1718" y="1185" width="34" height="34" fill="url(#p26)"/></svg>
<svg class="main" width="1940" height="1474" shape-rendering="crispEdges"><path fill="#7d7266" d="M25 115h10v3h-10zM25 115h3v16h-3zM35 115h17v3h-17zM52 115h10v3h-10zM59 115h3v16h-3zM144 115h10v3h-10zM144 115h3v16h-3zM154 115h17v3h-17zM171 115h17v3h-17zM188 115h10v3h-10zM195 115h3v16h-3zM280 115h10v3h-10zM280 115h3v16h-3zM290 115h10v3h-10zM297 115h3v16h-3zM450 115h10v3h-10zM450 115h3v16h-3zM460 115h17v3h-17zM477 115h17v3h-17zM494 115h17v3h-17zM511 115h17v3h-17zM528 115h17v3h-17zM545 115h17v3h-17zM562 115h17v3h-17zM579 115h17v3h-17zM596 115h17v3h-17zM613 115h17v3h-17zM630 115h17v3h-17zM647 115h17v3h-17zM664 115h17v3h-17zM681 115h17v3h-17zM698 115h17v3h-17zM715 115h17v3h-17zM732 115h17v3h-17zM749 115h17v3h-17zM766 115h17v3h-17zM783 115h17v3h-17zM800 115h17v3h-17zM817 115h17v3h-17zM834 115h17v3h-17zM851 115h17v3h-17zM868 115h17v3h-17zM885 115h10v3h-10zM892 115h3v16h-3zM1045 115h10v3h-10zM1045 115h3v16h-3zM1055 115h17v3h-17zM1072 115h17v3h-17zM1089 115h17v3h-17zM1106 115h17v3h-17zM1123 115h17v3h-17zM1140 115h17v3h-17zM1157 115h17v3h-17zM1174 115h17v3h-17zM1191 115h17v3h-17zM1208 115h17v3h-17zM1225 115h17v3h-17zM1242 115h17v3h-17zM1259 115h17v3h-17zM1276 115h17v3h-17zM1293 115h17v3h-17zM1310 115h17v3h-17zM1327 115h17v3h-17zM1344 115h17v3h-17zM1361 115h17v3h-17zM1378 115h17v3h-17zM1395 115h17v3h-17zM1412 115h17v3h-17zM1429 115h17v3h-17zM1446 115h17v3h-17zM1463 115h17v3h-17zM1480 115h17v3h-17zM1497 115h17v3h-17zM1514 115h17v3h-17zM1531 115h17v3h-17zM1548 115h17v3h-17zM1565 115h17v3h-17zM1582 115h17v3h-17zM1599 115h17v3h-17zM1616 115h17v3h-17zM1633 115h17v3h-17zM1650 115h10v3h-10zM1657 115h3v16h-3zM1844 115h10v3h-10zM1844 115h3v16h-3zM1854 115h17v3h-17zM1871 115h10v3h-10zM1878 115h3v16h-3zM25 131h3v34h-3zM25 165h3v34h-3zM25 199h3v34h-3zM25 233h3v34h-3zM25 267h3v34h-3zM25 301h3v34h-3zM25 335h3v34h-3zM25 369h3v34h-3zM25 403h3v34h-3zM25 437h3v34h-3zM25 471h3v34h-3zM1878 131h3v34h-3zM1878 165h3v34h-3zM1878 199h3v34h-3zM1878 233h3v34h-3zM1878 267h3v34h-3zM1878 301h3v34h-3zM1878 335h3v34h-3zM1878 369h3v34h-3zM1878 403h3v34h-3zM1878 437h3v34h-3zM1878 471h3v34h-3zM25 505h3v21h-3zM25 523h10v3h-10zM35 523h17v3h-17zM52 523h17v3h-17zM69 523h17v3h-17zM86 523h17v3h-17zM103 523h17v3h-17zM120 523h17v3h-17zM137 523h17v3h-17zM154 523h17v3h-17zM171 523h17v3h-17zM188 523h17v3h-17zM205 523h17v3h-17zM222 523h17v3h-17zM239 523h17v3h-17zM256 523h17v3h-17zM273 523h17v3h-17zM290 523h17v3h-17zM307 523h17v3h-17zM324 523h17v3h-17zM341 523h17v3h-17zM358 523h17v3h-17zM375 523h17v3h-17zM392 523h17v3h-17zM409 523h17v3h-17zM426 523h17v3h-17zM443 523h17v3h-17zM460 523h17v3h-17zM477 523h17v3h-17zM494 523h17v3h-17zM511 523h17v3h-17zM528 523h17v3h-17zM545 523h17v3h-17zM562 523h17v3h-17zM579 523h17v3h-17zM596 523h17v3h-17zM613 523h17v3h-17zM630 523h17v3h-17zM647 523h17v3h-17zM664 523h17v3h-17zM681 523h17v3h-17zM698 523h17v3h-17zM715 523h17v3h-17zM732 523h17v3h-17zM749 523h17v3h-17zM766 523h17v3h-17zM783 523h17v3h-17zM800 523h17v3h-17zM817 523h17v3h-17zM834 523h17v3h-17zM851 523h17v3h-17zM868 523h17v3h-17zM885 523h17v3h-17zM902 523h17v3h-17zM919 523h17v3h-17zM936 523h17v3h-17zM953 523h17v3h-17zM970 523h17v3h-17zM987 523h17v3h-17zM1004 523h17v3h-17zM1021 523h17v3h-17zM1038 523h17v3h-17zM1055 523h17v3h-17zM1072 523h17v3h-17zM1089 523h17v3h-17zM1106 523h17v3h-17zM1123 523h17v3h-17zM1140 523h17v3h-17zM1157 523h17v3h-17zM1174 523h17v3h-17zM1191 523h17v3h-17zM1208 523h17v3h-17zM1225 523h17v3h-17zM1242 523h17v3h-17zM1259 523h17v3h-17zM1276 523h17v3h-17zM1293 523h17v3h-17zM1310 523h17v3h-17zM1327 523h17v3h-17zM1344 523h17v3h-17zM1361 523h17v3h-17zM1378 523h17v3h-17zM1395 523h17v3h-17zM1412 523h17v3h-17zM1429 523h17v3h-17zM1446 523h17v3h-17zM1463 523h17v3h-17zM1480 523h17v3h-17zM1497 523h17v3h-17zM1514 523h17v3h-17zM1531 523h17v3h-17zM1548 523h17v3h-17zM1565 523h17v3h-17zM1582 523h17v3h-17zM1599 523h17v3h-17zM1616 523h17v3h-17zM1633 523h17v3h-17zM1650 523h17v3h-17zM1667 523h17v3h-17zM1684 523h17v3h-17zM1701 523h17v3h-17zM1718 523h17v3h-17zM1735 523h17v3h-17zM1752 523h17v3h-17zM1769 523h17v3h-17zM1786 523h17v3h-17zM1803 523h17v3h-17zM1820 523h17v3h-17zM1837 523h17v3h-17zM1854 523h17v3h-17zM1878 505h3v21h-3zM1871 523h10v3h-10zM841 183h10v3h-10zM841 183h3v16h-3zM851 183h17v3h-17zM868 183h10v3h-10zM875 183h3v16h-3zM1113 183h10v3h-10zM1113 183h3v16h-3zM1123 183h17v3h-17zM1140 183h17v3h-17zM1157 183h17v3h-17zM1174 183h17v3h-17zM1191 183h17v3h-17zM1208 183h17v3h-17zM1225 183h17v3h-17zM1242 183h17v3h-17zM1259 183h17v3h-17zM1276 183h17v3h-17zM1293 183h17v3h-17zM1310 183h17v3h-17zM1327 183h17v3h-17zM1344 183h17v3h-17zM1361 183h17v3h-17zM1378 183h17v3h-17zM1395 183h17v3h-17zM1412 183h17v3h-17zM1429 183h17v3h-17zM1446 183h17v3h-17zM1463 183h17v3h-17zM1480 183h17v3h-17zM1497 183h17v3h-17zM1514 183h17v3h-17zM1531 183h17v3h-17zM1548 183h17v3h-17zM1565 183h17v3h-17zM1582 183h17v3h-17zM1599 183h17v3h-17zM1616 183h17v3h-17zM1633 183h17v3h-17zM1650 183h17v3h-17zM1667 183h17v3h-17zM1684 183h17v3h-17zM1701 183h10v3h-10zM1708 183h3v16h-3zM1844 183h10v3h-10zM1844 183h3v16h-3zM1854 183h10v3h-10zM1861 183h3v16h-3zM841 199h3v34h-3zM841 233h3v34h-3zM841 267h3v34h-3zM841 301h3v34h-3zM841 335h3v34h-3zM841 369h3v34h-3zM841 403h3v34h-3zM841 437h3v34h-3zM1861 199h3v34h-3zM1861 233h3v34h-3zM1861 267h3v34h-3zM1861 301h3v34h-3zM1861 335h3v34h-3zM1861 369h3v34h-3zM1861 403h3v34h-3zM1861 437h3v34h-3zM841 471h3v21h-3zM841 489h10v3h-10zM851 489h17v3h-17zM868 489h17v3h-17zM885 489h17v3h-17zM902 489h17v3h-17zM919 489h17v3h-17zM936 489h17v3h-17zM953 489h17v3h-17zM970 489h17v3h-17zM987 489h17v3h-17zM1004 489h17v3h-17zM1021 489h17v3h-17zM1038 489h17v3h-17zM1055 489h17v3h-17zM1072 489h17v3h-17zM1089 489h17v3h-17zM1106 489h17v3h-17zM1123 489h17v3h-17zM1140 489h17v3h-17zM1157 489h17v3h-17zM1174 489h17v3h-17zM1191 489h17v3h-17zM1208 489h17v3h-17zM1225 489h17v3h-17zM1242 489h17v3h-17zM1259 489h17v3h-17zM1276 489h17v3h-17zM1293 489h17v3h-17zM1310 489h17v3h-17zM1327 489h17v3h-17zM1344 489h17v3h-17zM1361 489h17v3h-17zM1378 489h17v3h-17zM1395 489h17v3h-17zM1412 489h17v3h-17zM1429 489h17v3h-17zM1446 489h17v3h-17zM1463 489h17v3h-17zM1480 489h17v3h-17zM1497 489h17v3h-17zM1514 489h17v3h-17zM1531 489h17v3h-17zM1548 489h17v3h-17zM1565 489h17v3h-17zM1582 489h17v3h-17zM1599 489h17v3h-17zM1616 489h17v3h-17zM1633 489h17v3h-17zM1650 489h17v3h-17zM1667 489h17v3h-17zM1684 489h17v3h-17zM1701 489h17v3h-17zM1718 489h17v3h-17zM1735 489h17v3h-17zM1752 489h17v3h-17zM1769 489h17v3h-17zM1786 489h17v3h-17zM1803 489h17v3h-17zM1820 489h17v3h-17zM1837 489h17v3h-17zM1861 471h3v21h-3zM1854 489h10v3h-10zM1181 233h3v34h-3zM1181 267h3v34h-3zM1181 301h3v34h-3zM1181 335h3v34h-3zM1181 369h3v34h-3zM1181 403h3v34h-3zM1521 233h3v34h-3zM1521 267h3v34h-3zM1521 301h3v34h-3zM1521 335h3v34h-3zM1521 369h3v34h-3zM1521 403h3v34h-3zM25 557h10v3h-10zM25 557h3v16h-3zM35 557h17v3h-17zM52 557h10v3h-10zM59 557h3v16h-3zM144 557h10v3h-10zM144 557h3v16h-3zM154 557h17v3h-17zM171 557h17v3h-17zM188 557h17v3h-17zM205 557h17v3h-17zM222 557h17v3h-17zM239 557h17v3h-17zM256 557h17v3h-17zM273 557h17v3h-17zM290 557h17v3h-17zM307 557h17v3h-17zM324 557h17v3h-17zM341 557h17v3h-17zM358 557h17v3h-17zM375 557h17v3h-17zM392 557h17v3h-17zM409 557h17v3h-17zM426 557h17v3h-17zM433 557h3v16h-3zM443 557h17v3h-17zM460 557h10v3h-10zM467 557h3v16h-3zM569 557h10v3h-10zM569 557h3v16h-3zM579 557h17v3h-17zM596 557h17v3h-17zM613 557h17v3h-17zM630 557h17v3h-17zM647 557h17v3h-17zM664 557h17v3h-17zM681 557h17v3h-17zM698 557h17v3h-17zM715 557h17v3h-17zM732 557h17v3h-17zM749 557h17v3h-17zM766 557h10v3h-10zM773 557h3v16h-3zM824 557h10v3h-10zM824 557h3v16h-3zM834 557h17v3h-17zM851 557h10v3h-10zM858 557h3v16h-3zM25 1423h3v21h-3zM25 1441h10v3h-10zM35 1441h17v3h-17zM52 1441h17v3h-17zM69 1441h17v3h-17zM86 1441h17v3h-17zM103 1441h17v3h-17zM120 1441h17v3h-17zM137 1441h17v3h-17zM154 1441h17v3h-17zM171 1441h17v3h-17zM188 1441h17v3h-17zM205 1441h17v3h-17zM222 1441h17v3h-17zM239 1441h17v3h-17zM256 1441h17v3h-17zM273 1441h17v3h-17zM290 1441h17v3h-17zM307 1441h17v3h-17zM324 1441h17v3h-17zM341 1441h17v3h-17zM358 1441h17v3h-17zM375 1441h17v3h-17zM392 1441h17v3h-17zM409 1441h17v3h-17zM426 1441h17v3h-17zM433 1423h3v21h-3zM443 1441h17v3h-17zM460 1441h17v3h-17zM477 1441h17v3h-17zM494 1441h17v3h-17zM511 1441h17v3h-17zM528 1441h17v3h-17zM545 1441h17v3h-17zM562 1441h17v3h-17zM579 1441h17v3h-17zM596 1441h17v3h-17zM613 1441h17v3h-17zM630 1441h17v3h-17zM647 1441h17v3h-17zM664 1441h17v3h-17zM681 1441h17v3h-17zM698 1441h17v3h-17zM715 1441h17v3h-17zM732 1441h17v3h-17zM749 1441h17v3h-17zM766 1441h17v3h-17zM783 1441h17v3h-17zM800 1441h17v3h-17zM817 1441h17v3h-17zM834 1441h17v3h-17zM858 1423h3v21h-3zM851 1441h10v3h-10zM25 573h3v34h-3zM433 573h3v34h-3zM433 591h10v3h-10zM858 573h3v34h-3zM851 591h10v3h-10zM25 607h3v34h-3zM25 625h10v3h-10zM433 607h3v34h-3zM426 625h10v3h-10zM858 607h3v34h-3zM25 641h3v34h-3zM433 641h3v34h-3zM858 641h3v34h-3zM25 675h3v34h-3zM433 675h3v34h-3zM858 675h3v34h-3zM25 709h3v34h-3zM433 709h3v34h-3zM858 709h3v34h-3zM25 743h3v34h-3zM25 761h10v3h-10zM433 743h3v34h-3zM426 761h10v3h-10zM858 743h3v34h-3zM25 777h3v34h-3zM433 777h3v34h-3zM858 777h3v34h-3zM25 811h3v34h-3zM433 811h3v34h-3zM858 811h3v34h-3zM25 845h3v34h-3zM433 845h3v34h-3zM858 845h3v34h-3zM25 879h3v34h-3zM25 897h10v3h-10zM433 879h3v34h-3zM426 897h10v3h-10zM858 879h3v34h-3zM25 913h3v34h-3zM433 913h3v34h-3zM858 913h3v34h-3zM25 947h3v34h-3zM433 947h3v34h-3zM858 947h3v34h-3zM25 981h3v34h-3zM433 981h3v34h-3zM433 999h10v3h-10zM858 981h3v34h-3zM851 999h10v3h-10zM25 1015h3v34h-3zM25 1033h10v3h-10zM433 1015h3v34h-3zM426 1033h10v3h-10zM858 1015h3v34h-3zM25 1049h3v34h-3zM433 1049h3v34h-3zM858 1049h3v34h-3zM25 1083h3v34h-3zM433 1083h3v34h-3zM858 1083h3v34h-3zM25 1117h3v34h-3zM433 1117h3v34h-3zM858 1117h3v34h-3zM25 1151h3v34h-3zM25 1169h10v3h-10zM433 1151h3v34h-3zM426 1169h10v3h-10zM858 1151h3v34h-3zM25 1185h3v34h-3zM433 1185h3v34h-3zM858 1185h3v34h-3zM25 1219h3v34h-3zM25 1237h10v3h-10zM433 1219h3v34h-3zM426 1237h10v3h-10zM858 1219h3v34h-3zM25 1253h3v34h-3zM433 1253h3v34h-3zM858 1253h3v34h-3zM25 1287h3v34h-3zM433 1287h3v34h-3zM858 1287h3v34h-3zM25 1321h3v34h-3zM433 1321h3v34h-3zM858 1321h3v34h-3zM25 1355h3v34h-3zM25 1373h10v3h-10zM433 1355h3v34h-3zM426 1373h10v3h-10zM858 1355h3v34h-3zM25 1389h3v34h-3zM433 1389h3v34h-3zM433 1407h10v3h-10zM858 1389h3v34h-3zM851 1407h10v3h-10zM35 625h17v3h-17zM137 625h17v3h-17zM154 625h17v3h-17zM171 625h17v3h-17zM188 625h17v3h-17zM205 625h17v3h-17zM222 625h17v3h-17zM239 625h17v3h-17zM256 625h17v3h-17zM341 625h17v3h-17zM409 625h17v3h-17zM35 761h17v3h-17zM222 761h17v3h-17zM239 761h17v3h-17zM256 761h17v3h-17zM341 761h17v3h-17zM409 761h17v3h-17zM35 897h17v3h-17zM171 897h17v3h-17zM188 897h17v3h-17zM205 897h17v3h-17zM222 897h17v3h-17zM239 897h17v3h-17zM256 897h17v3h-17zM341 897h17v3h-17zM409 897h17v3h-17zM35 1033h17v3h-17zM171 1033h17v3h-17zM188 1033h17v3h-17zM205 1033h17v3h-17zM222 1033h17v3h-17zM239 1033h17v3h-17zM256 1033h17v3h-17zM341 1033h17v3h-17zM409 1033h17v3h-17zM35 1169h17v3h-17zM52 1169h17v3h-17zM69 1169h17v3h-17zM86 1169h17v3h-17zM103 1169h17v3h-17zM120 1169h17v3h-17zM137 1169h17v3h-17zM154 1169h17v3h-17zM171 1169h17v3h-17zM188 1169h17v3h-17zM205 1169h17v3h-17zM222 1169h17v3h-17zM239 1169h17v3h-17zM256 1169h17v3h-17zM273 1169h17v3h-17zM290 1169h17v3h-17zM307 1169h17v3h-17zM324 1169h17v3h-17zM341 1169h17v3h-17zM358 1169h17v3h-17zM375 1169h17v3h-17zM392 1169h17v3h-17zM409 1169h17v3h-17zM35 1237h17v3h-17zM137 1237h17v3h-17zM154 1237h17v3h-17zM171 1237h17v3h-17zM188 1237h17v3h-17zM205 1237h17v3h-17zM222 1237h17v3h-17zM239 1237h17v3h-17zM256 1237h17v3h-17zM341 1237h17v3h-17zM409 1237h17v3h-17zM35 1373h17v3h-17zM52 1373h17v3h-17zM69 1373h17v3h-17zM86 1373h17v3h-17zM103 1373h17v3h-17zM120 1373h17v3h-17zM137 1373h17v3h-17zM154 1373h17v3h-17zM171 1373h17v3h-17zM188 1373h17v3h-17zM205 1373h17v3h-17zM222 1373h17v3h-17zM239 1373h17v3h-17zM256 1373h17v3h-17zM273 1373h17v3h-17zM290 1373h17v3h-17zM307 1373h17v3h-17zM324 1373h17v3h-17zM341 1373h17v3h-17zM358 1373h17v3h-17zM375 1373h17v3h-17zM392 1373h17v3h-17zM409 1373h17v3h-17zM443 591h17v3h-17zM511 591h17v3h-17zM528 591h17v3h-17zM545 591h17v3h-17zM562 591h17v3h-17zM579 591h17v3h-17zM596 591h17v3h-17zM613 591h17v3h-17zM630 591h17v3h-17zM647 591h17v3h-17zM664 591h17v3h-17zM681 591h17v3h-17zM698 591h17v3h-17zM715 591h17v3h-17zM732 591h17v3h-17zM749 591h17v3h-17zM834 591h17v3h-17zM443 999h17v3h-17zM562 999h17v3h-17zM579 999h17v3h-17zM596 999h17v3h-17zM613 999h17v3h-17zM630 999h17v3h-17zM647 999h17v3h-17zM664 999h17v3h-17zM681 999h17v3h-17zM698 999h17v3h-17zM715 999h17v3h-17zM732 999h17v3h-17zM749 999h17v3h-17zM834 999h17v3h-17zM443 1407h17v3h-17zM460 1407h17v3h-17zM477 1407h17v3h-17zM494 1407h17v3h-17zM511 1407h17v3h-17zM528 1407h17v3h-17zM545 1407h17v3h-17zM562 1407h17v3h-17zM579 1407h17v3h-17zM596 1407h17v3h-17zM613 1407h17v3h-17zM630 1407h17v3h-17zM647 1407h17v3h-17zM664 1407h17v3h-17zM681 1407h17v3h-17zM698 1407h17v3h-17zM715 1407h17v3h-17zM732 1407h17v3h-17zM749 1407h17v3h-17zM766 1407h17v3h-17zM783 1407h17v3h-17zM800 1407h17v3h-17zM817 1407h17v3h-17zM834 1407h17v3h-17zM875 557h10v3h-10zM875 557h3v16h-3zM885 557h17v3h-17zM902 557h10v3h-10zM909 557h3v16h-3zM1011 557h10v3h-10zM1011 557h3v16h-3zM1021 557h10v3h-10zM1028 557h3v16h-3zM1147 557h10v3h-10zM1147 557h3v16h-3zM1157 557h17v3h-17zM1174 557h17v3h-17zM1191 557h17v3h-17zM1208 557h17v3h-17zM1225 557h17v3h-17zM1242 557h17v3h-17zM1259 557h17v3h-17zM1276 557h17v3h-17zM1293 557h17v3h-17zM1310 557h17v3h-17zM1327 557h17v3h-17zM1344 557h10v3h-10zM1351 557h3v16h-3zM1436 557h10v3h-10zM1436 557h3v16h-3zM1446 557h10v3h-10zM1453 557h3v16h-3zM1606 557h10v3h-10zM1606 557h3v16h-3zM1616 557h10v3h-10zM1623 557h3v16h-3zM1844 557h10v3h-10zM1844 557h3v16h-3zM1854 557h17v3h-17zM1871 557h10v3h-10zM1878 557h3v16h-3zM875 573h3v34h-3zM875 607h3v34h-3zM875 641h3v34h-3zM875 675h3v34h-3zM875 709h3v34h-3zM875 743h3v34h-3zM875 777h3v34h-3zM875 811h3v34h-3zM875 845h3v34h-3zM875 879h3v34h-3zM875 913h3v34h-3zM875 947h3v34h-3zM875 981h3v34h-3zM875 1015h3v34h-3zM875 1049h3v34h-3zM875 1083h3v34h-3zM875 1117h3v34h-3zM875 1151h3v34h-3zM875 1185h3v34h-3zM875 1219h3v34h-3zM875 1253h3v34h-3zM875 1287h3v34h-3zM875 1321h3v34h-3zM875 1355h3v34h-3zM875 1389h3v34h-3zM1878 573h3v34h-3zM1878 607h3v34h-3zM1878 641h3v34h-3zM1878 675h3v34h-3zM1878 709h3v34h-3zM1878 743h3v34h-3zM1878 777h3v34h-3zM1878 811h3v34h-3zM1878 845h3v34h-3zM1878 879h3v34h-3zM1878 913h3v34h-3zM1878 947h3v34h-3zM1878 981h3v34h-3zM1878 1015h3v34h-3zM1878 1049h3v34h-3zM1878 1083h3v34h-3zM1878 1117h3v34h-3zM1878 1151h3v34h-3zM1878 1185h3v34h-3zM1878 1219h3v34h-3zM1878 1253h3v34h-3zM1878 1287h3v34h-3zM1878 1321h3v34h-3zM1878 1355h3v34h-3zM1878 1389h3v34h-3zM875 1423h3v21h-3zM875 1441h10v3h-10zM892 1423h3v21h-3zM885 1441h10v3h-10zM1079 1423h3v21h-3zM1079 1441h10v3h-10zM1096 1423h3v21h-3zM1089 1441h10v3h-10zM1215 1423h3v21h-3zM1215 1441h10v3h-10zM1232 1423h3v21h-3zM1225 1441h10v3h-10zM1402 1423h3v21h-3zM1402 1441h10v3h-10zM1412 1441h17v3h-17zM1429 1441h17v3h-17zM1446 1441h17v3h-17zM1463 1441h17v3h-17zM1480 1441h17v3h-17zM1497 1441h17v3h-17zM1514 1441h17v3h-17zM1531 1441h17v3h-17zM1548 1441h17v3h-17zM1565 1441h17v3h-17zM1582 1441h17v3h-17zM1599 1441h17v3h-17zM1616 1441h17v3h-17zM1633 1441h17v3h-17zM1650 1441h17v3h-17zM1667 1441h17v3h-17zM1684 1441h17v3h-17zM1701 1441h17v3h-17zM1718 1441h17v3h-17zM1735 1441h17v3h-17zM1759 1423h3v21h-3zM1752 1441h10v3h-10zM1861 1423h3v21h-3zM1861 1441h10v3h-10zM1878 1423h3v21h-3zM1871 1441h10v3h-10z"/></svg>
<svg class="main" width="1940" height="1474"><path d="M1063.5,1430.0 V1449.0 M1056.5,1442.0 L1063.5,1449.0 L1070.5,1442.0" stroke="#ea6962" stroke-width="2.8" fill="none"/><path d="M1862.5,581.0 V600.0 M1855.5,588.0 L1862.5,581.0 L1869.5,588.0" stroke="#d4be98" stroke-width="2.8" fill="none"/><path d="M1862.5,1396.0 V1415.0 M1855.5,1408.0 L1862.5,1415.0 L1869.5,1408.0" stroke="#d4be98" stroke-width="2.8" fill="none"/></svg>
<div class="t" style="left:69px;top:99px;color:#ea6962;font-size:22px;font-weight:bold;margin-left:2px;margin-top:-3px;">¹</div>
<div class="t" style="left:86px;top:99px;color:#d4be98;">cpu</div>
<div class="t" style="left:205px;top:99px;color:#ea6962;">m</div>
<div class="t" style="left:222px;top:99px;color:#d4be98;">enu</div>
<div class="t" style="left:307px;top:99px;color:#ea6962;">p</div>
<div class="t" style="left:324px;top:99px;color:#d4be98;">reset *</div>
<div class="t" style="left:902px;top:99px;color:#d4be98;">15:47:58</div>
<div class="t" style="left:1701px;top:99px;color:#d4be98;">1000ms</div>
<div class="t" style="left:1820px;top:99px;color:#ea6962;">+</div>
<div class="t" style="left:52px;top:473px;color:#7a7064;">up</div>
<div class="t" style="left:103px;top:473px;color:#7a7064;">00:14:47</div>
<div class="t" style="left:885px;top:167px;color:#d4be98;">Ryzen 7 2700X</div>
<div class="t" style="left:1718px;top:167px;color:#d4be98;">3.7 GHz</div>
<div class="t" style="left:851px;top:201px;color:#d4be98;">CPU</div>
<div class="t" style="left:1786px;top:201px;color:#ea6962;">100</div>
<div class="t" style="left:1837px;top:201px;color:#d4be98;">%</div>
<div class="t" style="left:851px;top:235px;color:#d4be98;">C0</div>
<div class="t" style="left:1106px;top:235px;color:#ea6962;">100</div>
<div class="t" style="left:1157px;top:235px;color:#d4be98;">%</div>
<div class="t" style="left:1191px;top:235px;color:#d4be98;">C6</div>
<div class="t" style="left:1446px;top:235px;color:#ea6962;">100</div>
<div class="t" style="left:1497px;top:235px;color:#d4be98;">%</div>
<div class="t" style="left:1531px;top:235px;color:#d4be98;">C12</div>
<div class="t" style="left:1786px;top:235px;color:#ea6962;">100</div>
<div class="t" style="left:1837px;top:235px;color:#d4be98;">%</div>
<div class="t" style="left:851px;top:269px;color:#d4be98;">C1</div>
<div class="t" style="left:1106px;top:269px;color:#ea6962;">100</div>
<div class="t" style="left:1157px;top:269px;color:#d4be98;">%</div>
<div class="t" style="left:1191px;top:269px;color:#d4be98;">C7</div>
<div class="t" style="left:1446px;top:269px;color:#ea6962;">100</div>
<div class="t" style="left:1497px;top:269px;color:#d4be98;">%</div>
<div class="t" style="left:1531px;top:269px;color:#d4be98;">C13</div>
<div class="t" style="left:1786px;top:269px;color:#ea6962;">100</div>
<div class="t" style="left:1837px;top:269px;color:#d4be98;">%</div>
<div class="t" style="left:851px;top:303px;color:#d4be98;">C2</div>
<div class="t" style="left:1106px;top:303px;color:#ea6962;">100</div>
<div class="t" style="left:1157px;top:303px;color:#d4be98;">%</div>
<div class="t" style="left:1191px;top:303px;color:#d4be98;">C8</div>
<div class="t" style="left:1446px;top:303px;color:#ea6962;">100</div>
<div class="t" style="left:1497px;top:303px;color:#d4be98;">%</div>
<div class="t" style="left:1531px;top:303px;color:#d4be98;">C14</div>
<div class="t" style="left:1786px;top:303px;color:#ea6962;">100</div>
<div class="t" style="left:1837px;top:303px;color:#d4be98;">%</div>
<div class="t" style="left:851px;top:337px;color:#d4be98;">C3</div>
<div class="t" style="left:1106px;top:337px;color:#ea6962;">100</div>
<div class="t" style="left:1157px;top:337px;color:#d4be98;">%</div>
<div class="t" style="left:1191px;top:337px;color:#d4be98;">C9</div>
<div class="t" style="left:1446px;top:337px;color:#ea6962;">100</div>
<div class="t" style="left:1497px;top:337px;color:#d4be98;">%</div>
<div class="t" style="left:1531px;top:337px;color:#d4be98;">C15</div>
<div class="t" style="left:1786px;top:337px;color:#ea6962;">100</div>
<div class="t" style="left:1837px;top:337px;color:#d4be98;">%</div>
<div class="t" style="left:851px;top:371px;color:#d4be98;">C4</div>
<div class="t" style="left:1106px;top:371px;color:#ea6962;">100</div>
<div class="t" style="left:1157px;top:371px;color:#d4be98;">%</div>
<div class="t" style="left:1191px;top:371px;color:#d4be98;">C10</div>
<div class="t" style="left:1446px;top:371px;color:#ea6962;">100</div>
<div class="t" style="left:1497px;top:371px;color:#d4be98;">%</div>
<div class="t" style="left:851px;top:405px;color:#d4be98;">C5</div>
<div class="t" style="left:1106px;top:405px;color:#ea6962;">100</div>
<div class="t" style="left:1157px;top:405px;color:#d4be98;">%</div>
<div class="t" style="left:1191px;top:405px;color:#d4be98;">C11</div>
<div class="t" style="left:1446px;top:405px;color:#ea6962;">100</div>
<div class="t" style="left:1497px;top:405px;color:#d4be98;">%</div>
<div class="t" style="left:1531px;top:439px;color:#d4be98;">LAV: 38.8 15.5 5.99</div>
<div class="t" style="left:69px;top:541px;color:#ea6962;font-size:22px;font-weight:bold;margin-left:2px;margin-top:-3px;">²</div>
<div class="t" style="left:86px;top:541px;color:#d4be98;">mem</div>
<div class="t" style="left:477px;top:541px;color:#ea6962;">d</div>
<div class="t" style="left:494px;top:541px;color:#d4be98;">isks</div>
<div class="t" style="left:783px;top:541px;color:#ea6962;">i</div>
<div class="t" style="left:800px;top:541px;color:#d4be98;">o</div>
<div class="t" style="left:52px;top:575px;color:#d4be98;">Total:</div>
<div class="t" style="left:273px;top:575px;color:#d4be98;">31.9 GiB</div>
<div class="t" style="left:52px;top:609px;color:#d4be98;">Used:</div>
<div class="t" style="left:273px;top:609px;color:#d4be98;">9.25</div>
<div class="t" style="left:358px;top:609px;color:#d4be98;">GiB</div>
<div class="t" style="left:69px;top:643px;color:#d4be98;">29%</div>
<div class="t" style="left:52px;top:745px;color:#d4be98;">Available:</div>
<div class="t" style="left:273px;top:745px;color:#d4be98;">22.3</div>
<div class="t" style="left:358px;top:745px;color:#d4be98;">GiB</div>
<div class="t" style="left:69px;top:779px;color:#d4be98;">70%</div>
<div class="t" style="left:52px;top:881px;color:#d4be98;">Cached:</div>
<div class="t" style="left:273px;top:881px;color:#d4be98;">6.19</div>
<div class="t" style="left:358px;top:881px;color:#d4be98;">GiB</div>
<div class="t" style="left:69px;top:915px;color:#d4be98;">19%</div>
<div class="t" style="left:52px;top:1017px;color:#d4be98;">Commit:</div>
<div class="t" style="left:273px;top:1017px;color:#d4be98;">12.9</div>
<div class="t" style="left:358px;top:1017px;color:#d4be98;">GiB</div>
<div class="t" style="left:69px;top:1051px;color:#d4be98;">38%</div>
<div class="t" style="left:52px;top:1187px;color:#d4be98;">Page+Virt:</div>
<div class="t" style="left:273px;top:1187px;color:#d4be98;">23.9 GiB</div>
<div class="t" style="left:52px;top:1221px;color:#d4be98;">Used:</div>
<div class="t" style="left:273px;top:1221px;color:#d4be98;">2.50</div>
<div class="t" style="left:358px;top:1221px;color:#d4be98;">GiB</div>
<div class="t" style="left:69px;top:1255px;color:#d4be98;">10%</div>
<div class="t" style="left:460px;top:575px;color:#d4be98;">C:</div>
<div class="t" style="left:766px;top:575px;color:#d4be98;">930G</div>
<div class="t" style="left:460px;top:609px;color:#d4be98;">IO</div>
<div class="t" style="left:443px;top:643px;color:#d4be98;">▲1.8M</div>
<div class="t" style="left:443px;top:949px;color:#d4be98;">▼6.3M</div>
<div class="t" style="left:460px;top:983px;color:#d4be98;">D: HDD</div>
<div class="t" style="left:766px;top:983px;color:#d4be98;">931G</div>
<div class="t" style="left:460px;top:1017px;color:#d4be98;">IO</div>
<div class="t" style="left:443px;top:1051px;color:#d4be98;">R</div>
<div class="t" style="left:443px;top:1357px;color:#d4be98;">W</div>
<div class="t" style="left:919px;top:541px;color:#ea6962;font-size:22px;font-weight:bold;margin-left:2px;margin-top:-3px;">⁴</div>
<div class="t" style="left:936px;top:541px;color:#d4be98;">proc</div>
<div class="t" style="left:1038px;top:541px;color:#ea6962;">f</div>
<div class="t" style="left:1055px;top:541px;color:#d4be98;">ilter</div>
<div class="t" style="left:1361px;top:541px;color:#d4be98;">tre</div>
<div class="t" style="left:1412px;top:541px;color:#ea6962;">e</div>
<div class="t" style="left:1463px;top:541px;color:#ea6962;">s</div>
<div class="t" style="left:1480px;top:541px;color:#d4be98;">ervices</div>
<div class="t" style="left:1633px;top:541px;color:#ea6962;">&lt;</div>
<div class="t" style="left:1667px;top:541px;color:#d4be98;">cpu lazy</div>
<div class="t" style="left:1820px;top:541px;color:#ea6962;">&gt;</div>
<div class="t" style="left:936px;top:1425px;color:#d4be98;">select</div>
<div class="t" style="left:1769px;top:1425px;color:#d4be98;">0/274</div>
<div class="t" style="left:953px;top:575px;color:#d4be98;">Pid:</div>
<div class="t" style="left:1038px;top:575px;color:#d4be98;">Program:</div>
<div class="t" style="left:1191px;top:575px;color:#d4be98;">Command:</div>
<div class="t" style="left:1463px;top:575px;color:#d4be98;">User:</div>
<div class="t" style="left:1582px;top:575px;color:#d4be98;">MemB</div>
<div class="t" style="left:1769px;top:575px;color:#d4be98;">Cpu%</div>
<div class="t" style="left:936px;top:609px;color:#d4be98;">20968</div>
<div class="t" style="left:1038px;top:609px;color:#a9b665;">rustc</div>
<div class="t" style="left:1191px;top:609px;color:#d4be98;">&quot;rustc&quot; --crate</div>
<div class="t" style="left:1463px;top:609px;color:#d4be98;">yuso+</div>
<div class="t" style="left:1582px;top:609px;color:#a9b665;">1.3G</div>
<div class="t" style="left:1786px;top:609px;color:#a9b665;">5.8</div>
<div class="t" style="left:936px;top:643px;color:#d1bb96;">13092</div>
<div class="t" style="left:1038px;top:643px;color:#a6b364;">rustc</div>
<div class="t" style="left:1191px;top:643px;color:#d1bb96;">&quot;rustc&quot; --crate</div>
<div class="t" style="left:1463px;top:643px;color:#d1bb96;">yuso+</div>
<div class="t" style="left:1582px;top:643px;color:#a6b364;">180M</div>
<div class="t" style="left:1786px;top:643px;color:#a6b364;">0.4</div>
<div class="t" style="left:936px;top:677px;color:#cdb893;">14520</div>
<div class="t" style="left:1038px;top:677px;color:#a4b062;">rustc</div>
<div class="t" style="left:1191px;top:677px;color:#cdb893;">&quot;rustc&quot; --crate</div>
<div class="t" style="left:1463px;top:677px;color:#cdb893;">yuso+</div>
<div class="t" style="left:1599px;top:677px;color:#a4b062;">87M</div>
<div class="t" style="left:1786px;top:677px;color:#a4b062;">0.3</div>
<div class="t" style="left:953px;top:711px;color:#cab591;">8152</div>
<div class="t" style="left:1038px;top:711px;color:#a1ad61;">rustc</div>
<div class="t" style="left:1191px;top:711px;color:#cab591;">&quot;rustc&quot; --crate</div>
<div class="t" style="left:1463px;top:711px;color:#cab591;">yuso+</div>
<div class="t" style="left:1582px;top:711px;color:#a1ad61;">219M</div>
<div class="t" style="left:1786px;top:711px;color:#a1ad61;">0.4</div>
<div class="t" style="left:953px;top:745px;color:#c7b38f;">3360</div>
<div class="t" style="left:1038px;top:745px;color:#9fab60;">rustc</div>
<div class="t" style="left:1191px;top:745px;color:#c7b38f;">&quot;rustc&quot; --crate</div>
<div class="t" style="left:1463px;top:745px;color:#c7b38f;">yuso+</div>
<div class="t" style="left:1582px;top:745px;color:#9fab60;">168M</div>
<div class="t" style="left:1786px;top:745px;color:#9fab60;">0.4</div>
<div class="t" style="left:953px;top:779px;color:#bca989;">6980</div>
<div class="t" style="left:1038px;top:779px;color:#97a25c;">rustc</div>
<div class="t" style="left:1191px;top:779px;color:#bca989;">&quot;rustc&quot; --crate</div>
<div class="t" style="left:1463px;top:779px;color:#bca989;">yuso+</div>
<div class="t" style="left:1582px;top:779px;color:#97a25c;">195M</div>
<div class="t" style="left:1786px;top:779px;color:#97a25c;">0.4</div>
<div class="t" style="left:953px;top:813px;color:#b7a585;">9128</div>
<div class="t" style="left:1038px;top:813px;color:#949e5b;">vctip</div>
<div class="t" style="left:1191px;top:813px;color:#b7a585;">&quot;C:\Program Fil</div>
<div class="t" style="left:1463px;top:813px;color:#b7a585;">yuso+</div>
<div class="t" style="left:1599px;top:813px;color:#949e5b;">33M</div>
<div class="t" style="left:1786px;top:813px;color:#949e5b;">0.2</div>
<div class="t" style="left:953px;top:847px;color:#b19f81;">2480</div>
<div class="t" style="left:1038px;top:847px;color:#8f9958;">rustc</div>
<div class="t" style="left:1191px;top:847px;color:#b19f81;">rustc.exe</div>
<div class="t" style="left:1463px;top:847px;color:#b19f81;">yuso+</div>
<div class="t" style="left:1599px;top:847px;color:#8f9958;">36M</div>
<div class="t" style="left:1786px;top:847px;color:#8f9958;">0.0</div>
<div class="t" style="left:936px;top:881px;color:#a9987c;">11784</div>
<div class="t" style="left:1038px;top:881px;color:#889255;">rustc</div>
<div class="t" style="left:1191px;top:881px;color:#a9987c;">&quot;rustc&quot; --crate</div>
<div class="t" style="left:1463px;top:881px;color:#a9987c;">yuso+</div>
<div class="t" style="left:1599px;top:881px;color:#889255;">62M</div>
<div class="t" style="left:1786px;top:881px;color:#889255;">0.3</div>
<div class="t" style="left:953px;top:915px;color:#a29277;">7056</div>
<div class="t" style="left:1038px;top:915px;color:#838d53;">rustc</div>
<div class="t" style="left:1191px;top:915px;color:#a29277;">rustc.exe</div>
<div class="t" style="left:1463px;top:915px;color:#a29277;">yuso+</div>
<div class="t" style="left:1599px;top:915px;color:#838d53;">23M</div>
<div class="t" style="left:1786px;top:915px;color:#838d53;">0.0</div>
<div class="t" style="left:936px;top:949px;color:#9b8d73;">17512</div>
<div class="t" style="left:1038px;top:949px;color:#7e8750;">rustc</div>
<div class="t" style="left:1191px;top:949px;color:#9b8d73;">rustc.exe</div>
<div class="t" style="left:1463px;top:949px;color:#9b8d73;">yuso+</div>
<div class="t" style="left:1599px;top:949px;color:#7e8750;">27M</div>
<div class="t" style="left:1786px;top:949px;color:#7e8750;">0.0</div>
<div class="t" style="left:953px;top:983px;color:#93856d;">4440</div>
<div class="t" style="left:1038px;top:983px;color:#78804e;">rustc</div>
<div class="t" style="left:1191px;top:983px;color:#93856d;">rustc.exe</div>
<div class="t" style="left:1463px;top:983px;color:#93856d;">yuso+</div>
<div class="t" style="left:1599px;top:983px;color:#78804e;">59M</div>
<div class="t" style="left:1786px;top:983px;color:#78804e;">0.0</div>
<div class="t" style="left:953px;top:1017px;color:#877b66;">2580</div>
<div class="t" style="left:1038px;top:1017px;color:#6f7749;">ScreenCl</div>
<div class="t" style="left:1191px;top:1017px;color:#877b66;">&quot;C:\WINDOWS\Sys</div>
<div class="t" style="left:1463px;top:1017px;color:#877b66;">yuso+</div>
<div class="t" style="left:1599px;top:1017px;color:#6f7749;">79M</div>
<div class="t" style="left:1786px;top:1017px;color:#6f7749;">0.0</div>
<div class="t" style="left:936px;top:1051px;color:#817561;">20804</div>
<div class="t" style="left:1038px;top:1051px;color:#6a7147;">rustc</div>
<div class="t" style="left:1191px;top:1051px;color:#817561;">rustc.exe</div>
<div class="t" style="left:1463px;top:1051px;color:#817561;">yuso+</div>
<div class="t" style="left:1599px;top:1051px;color:#6a7147;">11M</div>
<div class="t" style="left:1786px;top:1051px;color:#6a7147;">0.0</div>
<div class="t" style="left:936px;top:1085px;color:#7a6f5d;">19968</div>
<div class="t" style="left:1038px;top:1085px;color:#656c44;">btop</div>
<div class="t" style="left:1191px;top:1085px;color:#7a6f5d;">&quot;C:\Users\yuson</div>
<div class="t" style="left:1463px;top:1085px;color:#7a6f5d;">yuso+</div>
<div class="t" style="left:1582px;top:1085px;color:#656c44;">9.8M</div>
<div class="t" style="left:1786px;top:1085px;color:#656c44;">0.1</div>
<div class="t" style="left:953px;top:1119px;color:#776d5b;">6920</div>
<div class="t" style="left:1038px;top:1119px;color:#636943;">Snipping</div>
<div class="t" style="left:1191px;top:1119px;color:#776d5b;">&quot;C:\Program Fil</div>
<div class="t" style="left:1463px;top:1119px;color:#776d5b;">yuso+</div>
<div class="t" style="left:1582px;top:1119px;color:#636943;">205M</div>
<div class="t" style="left:1786px;top:1119px;color:#636943;">0.0</div>
<div class="t" style="left:936px;top:1153px;color:#706757;">18868</div>
<div class="t" style="left:1038px;top:1153px;color:#5e6341;">cargo</div>
<div class="t" style="left:1191px;top:1153px;color:#706757;">&quot;C:\Users\yuson</div>
<div class="t" style="left:1463px;top:1153px;color:#706757;">yuso+</div>
<div class="t" style="left:1599px;top:1153px;color:#5e6341;">80M</div>
<div class="t" style="left:1786px;top:1153px;color:#5e6341;">0.0</div>
<div class="t" style="left:936px;top:1187px;color:#665e50;">10920</div>
<div class="t" style="left:1038px;top:1187px;color:#565b3d;">WindowsT</div>
<div class="t" style="left:1191px;top:1187px;color:#665e50;">&quot;C:\Program Fil</div>
<div class="t" style="left:1463px;top:1187px;color:#665e50;">yuso+</div>
<div class="t" style="left:1582px;top:1187px;color:#565b3d;">175M</div>
<div class="t" style="left:1786px;top:1187px;color:#565b3d;">0.0</div>
<div class="t" style="left:953px;top:1221px;color:#60584c;">7340</div>
<div class="t" style="left:1038px;top:1221px;color:#51563b;">cargo</div>
<div class="t" style="left:1191px;top:1221px;color:#60584c;">&quot;C:\Users\yuson</div>
<div class="t" style="left:1463px;top:1221px;color:#60584c;">yuso+</div>
<div class="t" style="left:1599px;top:1221px;color:#51563b;">80M</div>
<div class="t" style="left:1786px;top:1221px;color:#51563b;">0.0</div>
<div class="t" style="left:953px;top:1255px;color:#565045;">1684</div>
<div class="t" style="left:1038px;top:1255px;color:#4a4e37;">cargo</div>
<div class="t" style="left:1191px;top:1255px;color:#565045;">&quot;C:\Users\yuson</div>
<div class="t" style="left:1463px;top:1255px;color:#565045;">yuso+</div>
<div class="t" style="left:1599px;top:1255px;color:#4a4e37;">48M</div>
<div class="t" style="left:1786px;top:1255px;color:#4a4e37;">0.0</div>
<div class="t" style="left:936px;top:1289px;color:#4d4940;">20024</div>
<div class="t" style="left:1038px;top:1289px;color:#444734;">Cloudfla</div>
<div class="t" style="left:1191px;top:1289px;color:#4d4940;">&quot;C:\Program Fil</div>
<div class="t" style="left:1463px;top:1289px;color:#4d4940;">yuso+</div>
<div class="t" style="left:1582px;top:1289px;color:#444734;">101M</div>
<div class="t" style="left:1786px;top:1289px;color:#444734;">0.0</div>
<div class="t" style="left:936px;top:1323px;color:#45413a;">19788</div>
<div class="t" style="left:1038px;top:1323px;color:#3e4031;">vctip</div>
<div class="t" style="left:1191px;top:1323px;color:#45413a;">&quot;C:\Program Fil</div>
<div class="t" style="left:1463px;top:1323px;color:#45413a;">yuso+</div>
<div class="t" style="left:1599px;top:1323px;color:#3e4031;">36M</div>
<div class="t" style="left:1786px;top:1323px;color:#3e4031;">0.0</div>
<div class="t" style="left:953px;top:1357px;color:#3b3934;">5136</div>
<div class="t" style="left:1038px;top:1357px;color:#36382e;">explorer</div>
<div class="t" style="left:1191px;top:1357px;color:#3b3934;">C:\WINDOWS\Expl</div>
<div class="t" style="left:1463px;top:1357px;color:#3b3934;">yuso+</div>
<div class="t" style="left:1582px;top:1357px;color:#36382e;">257M</div>
<div class="t" style="left:1786px;top:1357px;color:#36382e;">0.0</div>
<div class="t" style="left:936px;top:1391px;color:#32312e;">14312</div>
<div class="t" style="left:1038px;top:1391px;color:#2f302a;">nvcontai</div>
<div class="t" style="left:1191px;top:1391px;color:#32312e;">&quot;C:\Program Fil</div>
<div class="t" style="left:1463px;top:1391px;color:#32312e;">yuso+</div>
<div class="t" style="left:1599px;top:1391px;color:#2f302a;">43M</div>
<div class="t" style="left:1786px;top:1391px;color:#2f302a;">0.0</div>
</div>
<div id="frame"></div>
</body></html>
